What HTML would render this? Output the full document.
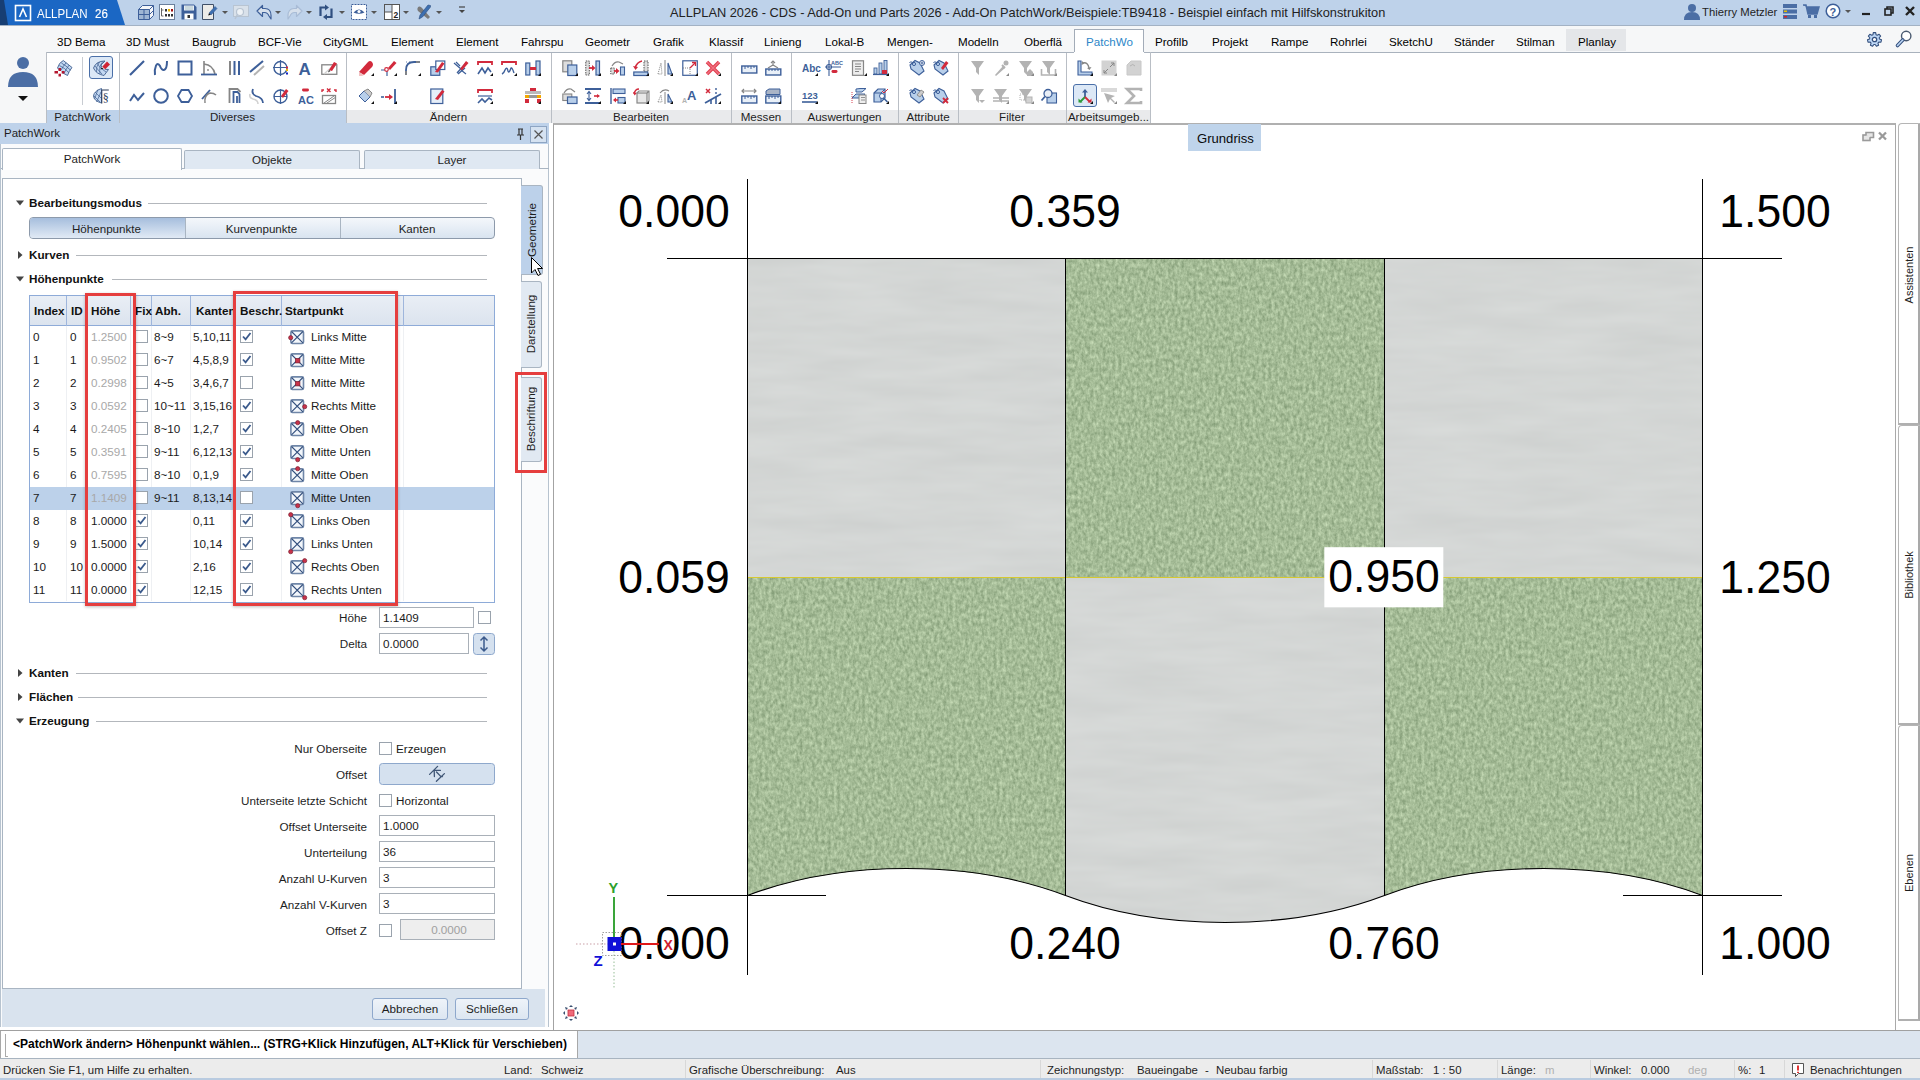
<!DOCTYPE html><html><head><meta charset="utf-8"><style>
*{margin:0;padding:0;box-sizing:border-box}
html,body{width:1920px;height:1080px;overflow:hidden;background:#fff;font-family:"Liberation Sans",sans-serif;color:#1a1a1a}
.a{position:absolute}
.t{position:absolute;white-space:nowrap;line-height:1}
svg{position:absolute;overflow:visible}
</style></head><body><div class="a" style="left:0px;top:0px;width:1920px;height:25px;background:#bed2ea"></div>
<svg style="left:0;top:0" width="130" height="25"><polygon points="0,0 117,0 125,25 0,25" fill="#1b67c4"/><polygon points="0,0 4,0 8,25 0,25" fill="#173e73"/><rect x="15.5" y="5.5" width="15" height="15" fill="none" stroke="#fff" stroke-width="1.6"/><path d="M19.5 17 L23 9 L26.5 17" fill="none" stroke="#fff" stroke-width="1.6"/></svg>
<div class="t" style="left:37px;top:8px;font-size:12.8px;color:#fff;font-weight:normal;transform:scaleX(0.9);transform-origin:0 0">ALLPLAN</div>
<div class="t" style="left:95px;top:8px;font-size:12.8px;color:#fff;font-weight:normal;transform:scaleX(0.9);transform-origin:0 0;-webkit-text-stroke:0.15px #fff">26</div>
<div class="t" style="left:670px;top:7px;font-size:12.8px;color:#222;font-weight:normal;">ALLPLAN 2026 - CDS - Add-On und Parts 2026 - Add-On PatchWork/Beispiele:TB9418 - Beispiel einfach mit Hilfskonstrukiton</div>
<div class="a" style="left:0px;top:25px;width:1920px;height:27px;background:#f6f7f8"></div>
<div class="a" style="left:0px;top:25px;width:1920px;height:1px;background:#a3b2c4"></div>
<div class="a" style="left:1566px;top:29px;width:60px;height:22px;background:#e4e6e9"></div>
<div class="a" style="left:1074px;top:29px;width:70px;height:25px;background:#fff;border:1px solid #a3acb8;border-bottom:none"></div>
<div class="t" style="left:57px;top:36px;font-size:11.6px;color:#000;font-weight:normal;">3D Bema</div>
<div class="t" style="left:126px;top:36px;font-size:11.6px;color:#000;font-weight:normal;">3D Must</div>
<div class="t" style="left:192px;top:36px;font-size:11.6px;color:#000;font-weight:normal;">Baugrub</div>
<div class="t" style="left:258px;top:36px;font-size:11.6px;color:#000;font-weight:normal;">BCF-Vie</div>
<div class="t" style="left:323px;top:36px;font-size:11.6px;color:#000;font-weight:normal;">CityGML</div>
<div class="t" style="left:391px;top:36px;font-size:11.6px;color:#000;font-weight:normal;">Element</div>
<div class="t" style="left:456px;top:36px;font-size:11.6px;color:#000;font-weight:normal;">Element</div>
<div class="t" style="left:521px;top:36px;font-size:11.6px;color:#000;font-weight:normal;">Fahrspu</div>
<div class="t" style="left:585px;top:36px;font-size:11.6px;color:#000;font-weight:normal;">Geometr</div>
<div class="t" style="left:653px;top:36px;font-size:11.6px;color:#000;font-weight:normal;">Grafik</div>
<div class="t" style="left:709px;top:36px;font-size:11.6px;color:#000;font-weight:normal;">Klassif</div>
<div class="t" style="left:764px;top:36px;font-size:11.6px;color:#000;font-weight:normal;">Linieng</div>
<div class="t" style="left:825px;top:36px;font-size:11.6px;color:#000;font-weight:normal;">Lokal-B</div>
<div class="t" style="left:887px;top:36px;font-size:11.6px;color:#000;font-weight:normal;">Mengen-</div>
<div class="t" style="left:958px;top:36px;font-size:11.6px;color:#000;font-weight:normal;">Modelln</div>
<div class="t" style="left:1024px;top:36px;font-size:11.6px;color:#000;font-weight:normal;">Oberflä</div>
<div class="t" style="left:1086px;top:36px;font-size:11.6px;color:#2c86c8;font-weight:normal;">PatchWo</div>
<div class="t" style="left:1155px;top:36px;font-size:11.6px;color:#000;font-weight:normal;">Profilb</div>
<div class="t" style="left:1212px;top:36px;font-size:11.6px;color:#000;font-weight:normal;">Projekt</div>
<div class="t" style="left:1271px;top:36px;font-size:11.6px;color:#000;font-weight:normal;">Rampe</div>
<div class="t" style="left:1330px;top:36px;font-size:11.6px;color:#000;font-weight:normal;">Rohrlei</div>
<div class="t" style="left:1389px;top:36px;font-size:11.6px;color:#000;font-weight:normal;">SketchU</div>
<div class="t" style="left:1454px;top:36px;font-size:11.6px;color:#000;font-weight:normal;">Ständer</div>
<div class="t" style="left:1516px;top:36px;font-size:11.6px;color:#000;font-weight:normal;">Stilman</div>
<div class="t" style="left:1578px;top:36px;font-size:11.6px;color:#000;font-weight:normal;">Planlay</div>
<div class="a" style="left:0px;top:52px;width:1920px;height:71px;background:#fff"></div>
<div class="a" style="left:0px;top:52px;width:1074px;height:1px;background:#a9b2bd"></div>
<div class="a" style="left:1144px;top:52px;width:776px;height:1px;background:#a9b2bd"></div>
<div class="a" style="left:0px;top:52px;width:46px;height:71px;background:#f6f7f8"></div>
<div class="a" style="left:46px;top:52px;width:1px;height:71px;background:#b9bec5"></div>
<div class="a" style="left:1150px;top:52px;width:1px;height:71px;background:#b9bec5"></div>
<div class="a" style="left:47px;top:110px;width:300px;height:13px;background:#bed2ea"></div>
<div class="a" style="left:347px;top:110px;width:803px;height:13px;background:#e9eaec"></div>
<div class="t" style="left:46px;top:111px;width:73px;text-align:center;font-size:11.6px;color:#1e1e1e">PatchWork</div>
<div class="a" style="left:119px;top:53px;width:1px;height:70px;background:#b9bec5"></div>
<div class="t" style="left:119px;top:111px;width:227px;text-align:center;font-size:11.6px;color:#1e1e1e">Diverses</div>
<div class="a" style="left:346px;top:53px;width:1px;height:70px;background:#b9bec5"></div>
<div class="t" style="left:346px;top:111px;width:205px;text-align:center;font-size:11.6px;color:#1e1e1e">Ändern</div>
<div class="a" style="left:551px;top:53px;width:1px;height:70px;background:#b9bec5"></div>
<div class="t" style="left:551px;top:111px;width:180px;text-align:center;font-size:11.6px;color:#1e1e1e">Bearbeiten</div>
<div class="a" style="left:731px;top:53px;width:1px;height:70px;background:#b9bec5"></div>
<div class="t" style="left:731px;top:111px;width:60px;text-align:center;font-size:11.6px;color:#1e1e1e">Messen</div>
<div class="a" style="left:791px;top:53px;width:1px;height:70px;background:#b9bec5"></div>
<div class="t" style="left:791px;top:111px;width:107px;text-align:center;font-size:11.6px;color:#1e1e1e">Auswertungen</div>
<div class="a" style="left:898px;top:53px;width:1px;height:70px;background:#b9bec5"></div>
<div class="t" style="left:898px;top:111px;width:60px;text-align:center;font-size:11.6px;color:#1e1e1e">Attribute</div>
<div class="a" style="left:958px;top:53px;width:1px;height:70px;background:#b9bec5"></div>
<div class="t" style="left:958px;top:111px;width:108px;text-align:center;font-size:11.6px;color:#1e1e1e">Filter</div>
<div class="a" style="left:1066px;top:53px;width:1px;height:70px;background:#b9bec5"></div>
<div class="t" style="left:1066px;top:111px;width:85px;text-align:center;font-size:11.6px;color:#1e1e1e">Arbeitsumgeb...</div>
<svg style="left:6px;top:54px" width="34" height="48"><circle cx="17" cy="9" r="6" fill="#4b6ea5"/><path d="M2 33 Q2 18 17 18 Q32 18 32 33 Z" fill="#4b6ea5"/><path d="M12 42h10l-5 5z" fill="#111"/></svg>
<svg style="left:56px;top:60px" width="16" height="16" viewBox="0 0 16 16"><path d="M1.5 8 Q3 2.5 7.3 0.5 L16 7.5 Q13 11 11.5 15.5 Q5 13 1.5 8 Z" fill="#c3d8f2" stroke="#3f5f8f" stroke-width="0.9"/><path d="M3.4 5.5 Q9 8 13 12.8 M5.4 3 Q10 5.5 14.5 10.2 M10.2 2.8 Q7 6 4.8 10.5 M13.1 5.2 Q10 9 8.2 13" fill="none" stroke="#3f5f8f" stroke-width="0.8"/><g fill="#b5172f"><rect x="-1.5" y="11" width="3.5" height="2.5"/><rect x="5.5" y="11" width="3" height="2.5"/><rect x="2.5" y="8" width="2.5" height="3"/><rect x="2.5" y="13.5" width="2.5" height="3"/></g><rect x="2" y="11" width="3.5" height="2.5" fill="#fff"/></svg>
<div class="a" style="left:82px;top:57px;width:1px;height:48px;background:#c8ccd2"></div>
<div class="a" style="left:89px;top:56px;width:24px;height:23px;background:#dce8f6;border:1.3px solid #4a6fa8;border-radius:3px"></div>
<svg style="left:93px;top:60px" width="16" height="16" viewBox="0 0 16 16"><path d="M12 1 Q3 1 0.5 8 Q3 14 11 15.5 L15.5 9.5 Q9 10 8 5 Z" fill="#c3d8f2" stroke="#3f5f8f" stroke-width="0.9"/><path d="M4 3 Q6 8 13 12 M2 6 Q5 10 9 14 M6.5 2 Q2.5 7 3.5 12 M10 1.5 Q5.5 6 7 14" fill="none" stroke="#3f5f8f" stroke-width="0.7"/><path d="M9 7 L14 1.5 L17 4.5 L12 9.5 Z" fill="#d02535"/><path d="M9 7l-1.5 2.5l3-1z" fill="#111"/><path d="M9 7l3 2.5" stroke="#fff" stroke-width="0.8"/></svg>
<svg style="left:93px;top:88px" width="16" height="16" viewBox="0 0 16 16"><path d="M8.5 0.5 Q1 3 0.5 8 Q1 13 8.5 15 Z" fill="#c3d8f2" stroke="#3f5f8f" stroke-width="0.9"/><path d="M2 4 L8 10 M1 8 L7 14 M5 1.5 L1.5 11 M8 4 L3.5 14" stroke="#3f5f8f" stroke-width="0.7"/><path d="M8.8 2v13.5M8.8 2h7" stroke="#2a3c5a" stroke-width="1"/><text x="9.8" y="14" font-size="12" font-family="Liberation Serif" fill="#2a3c5a">§</text></svg>
<svg style="left:129px;top:60px" width="16" height="16" viewBox="0 0 16 16"><path d="M1 15L15 1" stroke="#3d5f99" stroke-width="2.2"/></svg>
<svg style="left:153px;top:60px" width="16" height="16" viewBox="0 0 16 16"><path d="M2 15 C1 8 4 0 7 6 C9 12 14 12 14 1" fill="none" stroke="#3d5f99" stroke-width="2"/></svg>
<svg style="left:177px;top:60px" width="16" height="16" viewBox="0 0 16 16"><rect x="1.5" y="1.5" width="13" height="13" fill="none" stroke="#3d5f99" stroke-width="2"/></svg>
<svg style="left:201px;top:60px" width="16" height="16" viewBox="0 0 16 16"><path d="M3 1v13 M3 4 Q12 5 14 14" fill="none" stroke="#868686" stroke-width="1.6"/><path d="M0 14.5h16" stroke="#3d5f99" stroke-width="1.8"/><circle cx="7" cy="10" r="0.9" fill="#868686"/></svg>
<svg style="left:228px;top:60px" width="16" height="16" viewBox="0 0 16 16"><path d="M2 1v14" stroke="#868686" stroke-width="2"/><path d="M6.5 1v14M11 1v14" stroke="#3d5f99" stroke-width="2"/></svg>
<svg style="left:249px;top:60px" width="16" height="16" viewBox="0 0 16 16"><path d="M1 12L14 1" stroke="#3d5f99" stroke-width="2"/><path d="M5 15L15 6" stroke="#b3b3b3" stroke-width="2"/></svg>
<svg style="left:273px;top:60px" width="16" height="16" viewBox="0 0 16 16"><circle cx="7.5" cy="8" r="6.5" fill="none" stroke="#3d5f99" stroke-width="1.4"/><path d="M7.5 0v16M0 7.5h15" stroke="#3d5f99" stroke-width="1.2"/><rect x="13" y="6.5" width="2" height="2" fill="#d22a3c"/><rect x="13" y="9" width="2" height="2" fill="#e8b400"/><rect x="13" y="12.5" width="2" height="2" fill="#1020c0"/></svg>
<svg style="left:298px;top:60px" width="16" height="16" viewBox="0 0 16 16"><text x="0.5" y="15" font-size="17" font-weight="bold" font-family="Liberation Sans" fill="#3d5f99">A</text></svg>
<svg style="left:321px;top:60px" width="16" height="16" viewBox="0 0 16 16"><rect x="0.8" y="4.8" width="15" height="9.5" fill="none" stroke="#868686" stroke-width="1.3"/><path d="M3 14L15 3" stroke="#d2d2d2" stroke-width="1.2"/><path d="M8 10 L13 2 L16 3.5 L11 11 Z" fill="#d22a3c"/><path d="M8 10l-1 2.5l2.5-1.5z" fill="#222"/></svg>
<svg style="left:358px;top:60px" width="16" height="16" viewBox="0 0 16 16"><path d="M1 12 L10 2 Q12 0 14 2 L15 4 Q15 6 14 7 L6 15 Z" fill="#d22a3c"/><path d="M1 12l5 3l-2 1h-3z" fill="#f0c0c0"/><path d="M13 16h3v-3z" fill="#111"/></svg>
<svg style="left:381px;top:60px" width="16" height="16" viewBox="0 0 16 16"><path d="M0 10h6M6 10v6" stroke="#3d5f99" stroke-width="1.2"/><circle cx="5.5" cy="9.5" r="1.8" fill="#fff" stroke="#d22a3c" stroke-width="1.2"/><path d="M7 8 L13 1 L15.5 3 L9 10 Z" fill="#d22a3c"/><path d="M13 16h3v-3z" fill="#111"/></svg>
<svg style="left:405px;top:60px" width="16" height="16" viewBox="0 0 16 16"><path d="M1 2h2M4 2h1" stroke="#3d5f99" stroke-width="0.8" stroke-dasharray="1 1"/><path d="M1 15V10 Q1 2 9 2 H15" fill="none" stroke="#3d5f99" stroke-width="1.8"/><path d="M1 15v-4" stroke="#868686" stroke-width="1.8"/><path d="M11 2h4" stroke="#868686" stroke-width="1.8"/><path d="M13 16h3v-3z" fill="#111"/></svg>
<svg style="left:430px;top:60px" width="16" height="16" viewBox="0 0 16 16"><rect x="0.8" y="6.8" width="9" height="8.5" fill="#b8cfea" stroke="#3d5f99" stroke-width="1.2"/><rect x="5.8" y="1" width="9" height="8.5" fill="#fff" stroke="#3d5f99" stroke-width="1.2"/><path d="M5 12 L12 2 L14.5 3.5 L8 12.5 Z" fill="#d22a3c"/></svg>
<svg style="left:453px;top:60px" width="16" height="16" viewBox="0 0 16 16"><path d="M1 3l7 6M5 14l7-6M4 13l9-10" stroke="#3d5f99" stroke-width="1.3"/><path d="M7 9 L13 1 L15.5 3 L9 10.5 Z" fill="#d22a3c"/><path d="M3 2l4 4M8 10l5 4" stroke="#3d5f99" stroke-width="1.2"/></svg>
<svg style="left:477px;top:60px" width="16" height="16" viewBox="0 0 16 16"><path d="M1 5V2h14v3" fill="none" stroke="#d22a3c" stroke-width="1.8"/><path d="M1 14l4-6l3 5l3-5l3 4" fill="none" stroke="#3d5f99" stroke-width="1.6"/><path d="M13 16h3v-3z" fill="#111"/></svg>
<svg style="left:501px;top:60px" width="16" height="16" viewBox="0 0 16 16"><path d="M1 5V2h14v3" fill="none" stroke="#d22a3c" stroke-width="1.8"/><path d="M1 14 Q3 13 4 10 Q6 6 7 11 Q8 14 10 8 Q11 7 13 13" fill="none" stroke="#3d5f99" stroke-width="1.4"/><path d="M13 16h3v-3z" fill="#111"/></svg>
<svg style="left:525px;top:60px" width="16" height="16" viewBox="0 0 16 16"><rect x="0.8" y="3" width="4" height="12" fill="#b8cfea" stroke="#3d5f99" stroke-width="1.2"/><rect x="11" y="1" width="4" height="14" fill="#b8cfea" stroke="#3d5f99" stroke-width="1.2"/><rect x="5" y="7" width="6" height="3" fill="#d22a3c"/><path d="M13 16h3v-3z" fill="#111"/></svg>
<svg style="left:562px;top:60px" width="16" height="16" viewBox="0 0 16 16"><rect x="0.8" y="0.8" width="9" height="11" fill="#ddd" stroke="#868686" stroke-width="1.2"/><rect x="5.8" y="5" width="9" height="10.5" fill="#b8cfea" stroke="#3d5f99" stroke-width="1.2"/><path d="M13 16h3v-3z" fill="#111"/></svg>
<svg style="left:585px;top:60px" width="16" height="16" viewBox="0 0 16 16"><rect x="0.8" y="1" width="3.5" height="14" fill="#ddd" stroke="#555" stroke-width="1" stroke-dasharray="1.5 1"/><rect x="11" y="1" width="3.5" height="14" fill="#b8cfea" stroke="#3d5f99" stroke-width="1.2"/><path d="M4 8h4" stroke="#d22a3c" stroke-width="1.8"/><path d="M7 5l3.5 3l-3.5 3z" fill="#d22a3c"/><path d="M13 16h3v-3z" fill="#111"/></svg>
<svg style="left:610px;top:60px" width="16" height="16" viewBox="0 0 16 16"><path d="M2 6 Q5 1 9 2 L13 4" fill="none" stroke="#868686" stroke-width="1.2"/><rect x="0.8" y="8" width="3.5" height="6" fill="#ddd" stroke="#555" stroke-dasharray="1.5 1"/><path d="M4 11h3" stroke="#d22a3c" stroke-width="1.8"/><path d="M6 8l3.5 3l-3.5 3z" fill="#d22a3c"/><rect x="10.5" y="7" width="4" height="8" fill="#b8cfea" stroke="#3d5f99" stroke-width="1.1"/></svg>
<svg style="left:633px;top:60px" width="16" height="16" viewBox="0 0 16 16"><path d="M2 8 Q4 2 9 1" fill="none" stroke="#d22a3c" stroke-width="1.6"/><path d="M0 6l2.5 4l2.5-3z" fill="#d22a3c"/><rect x="11" y="1" width="4" height="11" fill="#ddd" stroke="#555" stroke-dasharray="1.5 1"/><rect x="0.8" y="12" width="14" height="3.5" fill="#b8cfea" stroke="#3d5f99" stroke-width="1.2"/><path d="M13 16h3v-3z" fill="#111"/></svg>
<svg style="left:657px;top:60px" width="16" height="16" viewBox="0 0 16 16"><path d="M1 14 L4 3 L5 14 Z" fill="none" stroke="#868686" stroke-width="1" stroke-dasharray="1 1"/><path d="M8 0v16" stroke="#868686" stroke-width="1"/><path d="M11 3 L11 14 L15 14 Z" fill="#b8cfea" stroke="#3d5f99" stroke-width="1.1"/><path d="M13 16h3v-3z" fill="#111"/></svg>
<svg style="left:682px;top:60px" width="16" height="16" viewBox="0 0 16 16"><rect x="0.8" y="0.8" width="14.5" height="14.5" fill="none" stroke="#3d5f99" stroke-width="1.2"/><path d="M1 8h7v7" fill="none" stroke="#868686" stroke-width="1" stroke-dasharray="1 1"/><path d="M8 8l5-5" stroke="#d22a3c" stroke-width="1.3"/><path d="M10 2.5h3.5v3.5" fill="none" stroke="#d22a3c" stroke-width="1.3"/><path d="M13 16h3v-3z" fill="#111"/></svg>
<svg style="left:705px;top:60px" width="16" height="16" viewBox="0 0 16 16"><path d="M2 2 L14 14 M14 2 L2 14" stroke="#e04050" stroke-width="3.6"/><path d="M2 2 L14 14 M14 2 L2 14" stroke="#f07080" stroke-width="1.4"/><path d="M13 16h3v-3z" fill="#111"/></svg>
<svg style="left:741px;top:60px" width="16" height="16" viewBox="0 0 16 16"><rect x="0.8" y="6" width="15" height="7" fill="#e9f0f8" stroke="#3d5f99" stroke-width="1.4"/><path d="M4 6v3M7 6v2M10 6v3M13 6v2" stroke="#3d5f99" stroke-width="1"/></svg>
<svg style="left:765px;top:60px" width="16" height="16" viewBox="0 0 16 16"><rect x="0.8" y="9" width="15" height="6" fill="#e9f0f8" stroke="#3d5f99" stroke-width="1.4"/><path d="M4 9v2M7 9v2M10 9v2M13 9v2" stroke="#3d5f99" stroke-width="1"/><path d="M8 1v5M3 8l5-3l5 3" fill="none" stroke="#868686" stroke-width="1.2"/><path d="M6 3l2-2l2 2" fill="none" stroke="#868686" stroke-width="1.2"/></svg>
<svg style="left:802px;top:60px" width="16" height="16" viewBox="0 0 16 16"><text x="0" y="12" font-size="10" font-weight="bold" font-family="Liberation Sans" fill="#3d5f99">Abc</text><path d="M13 16h3v-3z" fill="#111"/></svg>
<svg style="left:825px;top:60px" width="16" height="16" viewBox="0 0 16 16"><circle cx="4" cy="7" r="2.5" fill="none" stroke="#3d5f99" stroke-width="1.1"/><path d="M4 0v16M0 7h16" stroke="#3d5f99" stroke-width="1.1"/><text x="6" y="5" font-size="5.5" font-weight="bold" font-family="Liberation Sans" fill="#3d5f99">ABC</text><rect x="6.5" y="10" width="6" height="3" rx="1.4" fill="#d22a3c"/></svg>
<svg style="left:851px;top:60px" width="16" height="16" viewBox="0 0 16 16"><rect x="1.5" y="0.8" width="11" height="14.5" fill="#eee" stroke="#868686" stroke-width="1.2"/><path d="M4 4h6M4 6.5h6M4 9h6M4 11.5h4" stroke="#868686" stroke-width="1"/><path d="M13 16h3v-3z" fill="#111"/></svg>
<svg style="left:873px;top:60px" width="16" height="16" viewBox="0 0 16 16"><rect x="1" y="8" width="3" height="6" fill="#b8cfea" stroke="#3d5f99" stroke-width="0.9"/><rect x="6" y="3" width="3" height="11" fill="#b8cfea" stroke="#3d5f99" stroke-width="0.9"/><rect x="11" y="0.5" width="3" height="13.5" fill="#b8cfea" stroke="#3d5f99" stroke-width="0.9"/><rect x="9" y="10" width="5" height="5" fill="#d22a3c"/><path d="M0 14.5h16" stroke="#3d5f99" stroke-width="1.2"/><path d="M13 16h3v-3z" fill="#111"/></svg>
<svg style="left:909px;top:60px" width="16" height="16" viewBox="0 0 16 16"><path d="M1 5 L6 0.5 L11 3 L15 11 L10 15 L2 9 Z" fill="#b8cfea" stroke="#3d5f99" stroke-width="1.1"/><circle cx="5" cy="4" r="1.6" fill="none" stroke="#3d5f99" stroke-width="1"/><path d="M4 4 Q2 0 0.5 3" fill="none" stroke="#3d5f99" stroke-width="0.9"/><circle cx="13" cy="3" r="2.5" fill="#fff" stroke="#3d5f99" stroke-width="1"/><path d="M13 1.5v3M11.5 3h3" stroke="#3d5f99" stroke-width="0.9"/></svg>
<svg style="left:933px;top:60px" width="16" height="16" viewBox="0 0 16 16"><path d="M1 5 L6 0.5 L11 3 L15 11 L10 15 L2 9 Z" fill="#b8cfea" stroke="#3d5f99" stroke-width="1.1"/><circle cx="5" cy="4" r="1.6" fill="none" stroke="#3d5f99" stroke-width="1"/><path d="M4 4 Q2 0 0.5 3" fill="none" stroke="#3d5f99" stroke-width="0.9"/><path d="M8 8 L13 1 L15.5 3 L10 10 Z" fill="#d22a3c"/></svg>
<svg style="left:970px;top:60px" width="16" height="16" viewBox="0 0 16 16"><path d="M1 1h13l-5 7v7l-3-3V8z" fill="#b3b3b3"/></svg>
<svg style="left:993px;top:60px" width="16" height="16" viewBox="0 0 16 16"><path d="M2 15 L10 6 L12 8 L3 16z" fill="#b3b3b3"/><circle cx="13" cy="3" r="2.5" fill="#b3b3b3"/><path d="M9 5l3 3" stroke="#b3b3b3" stroke-width="2"/><path d="M13 16h3v-3z" fill="#888"/></svg>
<svg style="left:1018px;top:60px" width="16" height="16" viewBox="0 0 16 16"><path d="M1 1h13l-5 7v7l-3-3V8z" fill="#b3b3b3"/><path d="M9 16v-4l3-3l3 3v4z" fill="#b3b3b3"/><path d="M13 16h3v-3z" fill="#888"/></svg>
<svg style="left:1041px;top:60px" width="16" height="16" viewBox="0 0 16 16"><path d="M1 1h13l-5 7v7l-3-3V8z" fill="#b3b3b3"/><path d="M0.5 9v6h14v-6" fill="none" stroke="#b3b3b3" stroke-width="1.6"/><path d="M13 16h3v-3z" fill="#888"/></svg>
<svg style="left:1077px;top:60px" width="16" height="16" viewBox="0 0 16 16"><path d="M1 1V15H15V12H4V1z" fill="#b8cfea" stroke="#3d5f99" stroke-width="1.1"/><path d="M6 3 Q11 2 12 8" fill="none" stroke="#868686" stroke-width="1.5"/><path d="M5 1l2.5 2.5l-3 1.5zM10 8l2.5 2l2-3z" fill="#868686"/><path d="M13 16h3v-3z" fill="#111"/></svg>
<svg style="left:1101px;top:60px" width="16" height="16" viewBox="0 0 16 16"><rect x="0.5" y="0.5" width="15" height="15" fill="#d2d2d2"/><path d="M3 13l4-4M3 13h3M3 13v-3M13 3l-4 4M13 3h-3M13 3v3" stroke="#868686" stroke-width="1"/><path d="M13 16h3v-3z" fill="#888"/></svg>
<svg style="left:1126px;top:60px" width="16" height="16" viewBox="0 0 16 16"><path d="M1 15V5l4-4h10v14z" fill="#d2d2d2" stroke="#c8c8c8"/><path d="M4 6 Q7 3 9 6" fill="none" stroke="#b3b3b3" stroke-width="1"/></svg>
<svg style="left:129px;top:88px" width="16" height="16" viewBox="0 0 16 16"><path d="M1 13L5 7L9 12L15 5" fill="none" stroke="#3d5f99" stroke-width="2"/></svg>
<svg style="left:153px;top:88px" width="16" height="16" viewBox="0 0 16 16"><circle cx="8" cy="8" r="6.8" fill="none" stroke="#3d5f99" stroke-width="2"/></svg>
<svg style="left:177px;top:88px" width="16" height="16" viewBox="0 0 16 16"><path d="M4.5 2h7l3.5 6l-3.5 6h-7l-3.5-6z" fill="none" stroke="#3d5f99" stroke-width="1.8"/></svg>
<svg style="left:201px;top:88px" width="16" height="16" viewBox="0 0 16 16"><path d="M1 11L9 2" stroke="#3d5f99" stroke-width="1.8"/><path d="M4 15 Q3 7 9 5 Q13 5 15 7" fill="none" stroke="#868686" stroke-width="1.5"/></svg>
<svg style="left:228px;top:88px" width="16" height="16" viewBox="0 0 16 16"><path d="M1.5 15V1h8 l3 3" fill="none" stroke="#868686" stroke-width="1.8"/><path d="M5.5 15V4h4l2 2v9" fill="none" stroke="#3d5f99" stroke-width="1.8"/><path d="M9 15v-7" stroke="#3d5f99" stroke-width="1.8"/></svg>
<svg style="left:249px;top:88px" width="16" height="16" viewBox="0 0 16 16"><path d="M4 1 Q2 6 7 8 Q14 10 14 15" fill="none" stroke="#3d5f99" stroke-width="1.8"/><path d="M1 6 Q0 10 4 11 Q9 12 9 16" fill="none" stroke="#d2d2d2" stroke-width="1.6"/></svg>
<svg style="left:273px;top:88px" width="16" height="16" viewBox="0 0 16 16"><circle cx="7.5" cy="8.5" r="6.5" fill="none" stroke="#3d5f99" stroke-width="1.4"/><path d="M7.5 1v15M1 8.5h13" stroke="#3d5f99" stroke-width="1.2"/><path d="M8 8 L13 1 L15.5 3 L10 10 Z" fill="#d22a3c"/></svg>
<svg style="left:298px;top:88px" width="16" height="16" viewBox="0 0 16 16"><rect x="4" y="0.5" width="7" height="3" rx="1.4" fill="#d22a3c"/><text x="0" y="15.5" font-size="11" font-weight="bold" font-family="Liberation Sans" fill="#3d5f99">AC</text></svg>
<svg style="left:321px;top:88px" width="16" height="16" viewBox="0 0 16 16"><path d="M1 4V2h2M13 2h2v2" fill="none" stroke="#d22a3c" stroke-width="1.4"/><path d="M6 0.5l3.5 3.5M9.5 0.5L6 4" stroke="#d22a3c" stroke-width="1.4"/><rect x="1.5" y="7.5" width="13" height="8" fill="none" stroke="#868686" stroke-width="1.3"/><path d="M3 15L13 8M6 15L15 9" stroke="#868686" stroke-width="1"/></svg>
<svg style="left:358px;top:88px" width="16" height="16" viewBox="0 0 16 16"><path d="M1 8 L6 3 L12 9 L7 14 Z" fill="#b8cfea" stroke="#3d5f99" stroke-width="1"/><path d="M6 3 L10 1 L14 5 L12 9" fill="#ccc" stroke="#868686" stroke-width="1"/><path d="M13 16h3v-3z" fill="#111"/></svg>
<svg style="left:381px;top:88px" width="16" height="16" viewBox="0 0 16 16"><path d="M0 9h3" stroke="#3d5f99" stroke-width="1.6"/><path d="M4 9h6" stroke="#d22a3c" stroke-width="1.8"/><path d="M8 6l4 3l-4 3z" fill="#d22a3c"/><path d="M14 1v15" stroke="#3d5f99" stroke-width="1.8"/><path d="M13 16h3v-3z" fill="#111"/></svg>
<svg style="left:430px;top:88px" width="16" height="16" viewBox="0 0 16 16"><rect x="0.8" y="1" width="12" height="14.5" fill="#e6eef8" stroke="#3d5f99" stroke-width="1.2"/><path d="M5 11 L12 2 L14.5 3.5 L8 12 Z" fill="#d22a3c"/></svg>
<svg style="left:477px;top:88px" width="16" height="16" viewBox="0 0 16 16"><path d="M1 5V2h14v3" fill="none" stroke="#d22a3c" stroke-width="1.8"/><path d="M1 8h14" stroke="#3d5f99" stroke-width="1.2"/><path d="M1 15l4-4l3 3l4-4l3 2" fill="none" stroke="#3d5f99" stroke-width="1.6"/><path d="M13 16h3v-3z" fill="#111"/></svg>
<svg style="left:525px;top:88px" width="16" height="16" viewBox="0 0 16 16"><rect x="5" y="0" width="6" height="3" fill="#d22a3c"/><rect x="0" y="3" width="16" height="3" fill="#bbb"/><rect x="0" y="7" width="16" height="3" fill="#f2a900"/><rect x="4" y="7" width="8" height="3" fill="#999"/><rect x="0" y="11" width="16" height="4" fill="#d22a3c"/><rect x="4" y="11" width="8" height="4" fill="#fff"/><path d="M13 16h3v-3z" fill="#111"/></svg>
<svg style="left:562px;top:88px" width="16" height="16" viewBox="0 0 16 16"><path d="M2 5 Q5 0 9 1 L13 4" fill="none" stroke="#868686" stroke-width="1.2"/><rect x="0.8" y="6" width="9" height="6.5" fill="#ddd" stroke="#868686" stroke-width="1.1"/><rect x="5.5" y="9" width="9.5" height="6.5" fill="#b8cfea" stroke="#3d5f99" stroke-width="1.2"/></svg>
<svg style="left:585px;top:88px" width="16" height="16" viewBox="0 0 16 16"><path d="M0 1h16M0 15h16" stroke="#3d5f99" stroke-width="1.8"/><path d="M4 4v8M2 6l2-2.5l2 2.5M2 10l2 2.5l2-2.5" fill="none" stroke="#3d5f99" stroke-width="1.1"/><path d="M9 8h5" stroke="#d22a3c" stroke-width="1.6"/><path d="M12 6l3 2l-3 2z" fill="#d22a3c"/><path d="M13 16h3v-3z" fill="#111"/></svg>
<svg style="left:610px;top:88px" width="16" height="16" viewBox="0 0 16 16"><path d="M1 0v16" stroke="#3d5f99" stroke-width="1.4"/><rect x="3" y="1" width="12" height="4.5" fill="#b8cfea" stroke="#3d5f99" stroke-width="1.1"/><rect x="8" y="9.5" width="7" height="5.5" fill="#b8cfea" stroke="#3d5f99" stroke-width="1.1"/><path d="M4 12h4" stroke="#d22a3c" stroke-width="1.6"/><path d="M3 12l3-2.5v5z" fill="#d22a3c"/><path d="M13 16h3v-3z" fill="#111"/></svg>
<svg style="left:633px;top:88px" width="16" height="16" viewBox="0 0 16 16"><path d="M1 6 Q2 1 6 1" fill="none" stroke="#d22a3c" stroke-width="1.5"/><path d="M0 4l1.5 3.5l2.5-2.5z" fill="#d22a3c"/><rect x="4" y="5" width="10" height="10" fill="#e8e8e8" stroke="#868686" stroke-width="1.2"/><path d="M4 5l2-2h10v10l-2 2M14 5l2-2" fill="none" stroke="#868686" stroke-width="1.1"/><path d="M13 16h3v-3z" fill="#111"/></svg>
<svg style="left:657px;top:88px" width="16" height="16" viewBox="0 0 16 16"><path d="M3 5 Q7 0 12 3" fill="none" stroke="#868686" stroke-width="1.1"/><path d="M1 14 L4 7 L5 14 Z" fill="none" stroke="#868686" stroke-dasharray="1 1"/><path d="M8 4v12" stroke="#868686" stroke-width="1"/><path d="M11 6 L11 14 L15 14 Z" fill="#b8cfea" stroke="#3d5f99" stroke-width="1.1"/><path d="M13 16h3v-3z" fill="#111"/></svg>
<svg style="left:682px;top:88px" width="16" height="16" viewBox="0 0 16 16"><text x="0" y="15" font-size="7" font-weight="bold" font-family="Liberation Sans" fill="#b3b3b3">A</text><text x="5" y="12" font-size="13" font-weight="bold" font-family="Liberation Sans" fill="#3d5f99">A</text></svg>
<svg style="left:705px;top:88px" width="16" height="16" viewBox="0 0 16 16"><path d="M1 1l4 4M5 1l-4 4" stroke="#d22a3c" stroke-width="1.5"/><path d="M11 0v2M11 4v2" stroke="#3d5f99" stroke-width="1.4"/><path d="M0 15 L16 6" stroke="#3d5f99" stroke-width="1.8"/><path d="M6 12v4M11 9v7" stroke="#3d5f99" stroke-width="1.6"/><path d="M13 16h3v-3z" fill="#111"/></svg>
<svg style="left:741px;top:88px" width="16" height="16" viewBox="0 0 16 16"><rect x="0.8" y="8" width="15" height="7" fill="#e9f0f8" stroke="#3d5f99" stroke-width="1.4"/><path d="M4 8v3M7 8v2M10 8v3M13 8v2" stroke="#3d5f99" stroke-width="1"/><path d="M1 3h14M3 1l-2 2l2 2M13 1l2 2l-2 2" fill="none" stroke="#868686" stroke-width="1.2"/></svg>
<svg style="left:765px;top:88px" width="16" height="16" viewBox="0 0 16 16"><rect x="0.8" y="8" width="15" height="7" fill="#e9f0f8" stroke="#3d5f99" stroke-width="1.4"/><path d="M4 8v3M7 8v2M10 8v3M13 8v2" stroke="#3d5f99" stroke-width="1"/><path d="M1 6.5V3l3-2h11v5.5z" fill="#a9b4c6" stroke="#3d5f99" stroke-width="1"/><path d="M13 16h3v-3z" fill="#111"/></svg>
<svg style="left:802px;top:88px" width="16" height="16" viewBox="0 0 16 16"><text x="0" y="11" font-size="9.5" font-weight="bold" font-family="Liberation Sans" fill="#3d5f99">123</text><path d="M0 14h15" stroke="#3d5f99" stroke-width="1.6"/><path d="M13 16h3v-3z" fill="#111"/></svg>
<svg style="left:851px;top:88px" width="16" height="16" viewBox="0 0 16 16"><path d="M1 10 L5 6 H14 L10 10 Z" fill="#b8cfea" stroke="#3d5f99" stroke-width="1"/><path d="M5 1 L9 0.5 H15 L11 4 H5z" fill="#b8cfea" stroke="#3d5f99" stroke-width="1"/><path d="M1 4v11" stroke="#d22a3c" stroke-width="0.9" stroke-dasharray="1 1"/><rect x="8" y="7" width="7" height="8.5" fill="#eee" stroke="#868686" stroke-width="1"/><path d="M10 9.5h4M10 12h4" stroke="#868686" stroke-width="0.9"/></svg>
<svg style="left:873px;top:88px" width="16" height="16" viewBox="0 0 16 16"><path d="M1 5 L5 1 H12 V10 L8 14 H1 Z" fill="#b8cfea" stroke="#3d5f99" stroke-width="1.2"/><path d="M1 5h7v9M8 5l4-4" fill="none" stroke="#3d5f99" stroke-width="1"/><circle cx="9" cy="8" r="2.5" fill="#fff" stroke="#3d5f99" stroke-width="1"/><path d="M10.5 10l4 4" stroke="#3d5f99" stroke-width="1.6"/><path d="M9 3l2 2l4-4" fill="none" stroke="#d22a3c" stroke-width="1"/><path d="M13 16h3v-3z" fill="#111"/></svg>
<svg style="left:909px;top:88px" width="16" height="16" viewBox="0 0 16 16"><path d="M1 5 L6 0.5 L11 3 L15 11 L10 15 L2 9 Z" fill="#b8cfea" stroke="#3d5f99" stroke-width="1.1"/><circle cx="5" cy="4" r="1.6" fill="none" stroke="#3d5f99" stroke-width="1"/><path d="M4 4 Q2 0 0.5 3" fill="none" stroke="#3d5f99" stroke-width="0.9"/><path d="M8 7 L12 2 L15 4 L11 9 Z" fill="#ccc" stroke="#868686" stroke-width="0.9"/></svg>
<svg style="left:933px;top:88px" width="16" height="16" viewBox="0 0 16 16"><path d="M1 5 L6 0.5 L11 3 L15 11 L10 15 L2 9 Z" fill="#b8cfea" stroke="#3d5f99" stroke-width="1.1"/><circle cx="5" cy="4" r="1.6" fill="none" stroke="#3d5f99" stroke-width="1"/><path d="M4 4 Q2 0 0.5 3" fill="none" stroke="#3d5f99" stroke-width="0.9"/><path d="M10 10l5 5M15 10l-5 5" stroke="#d22a3c" stroke-width="1.8"/></svg>
<svg style="left:970px;top:88px" width="16" height="16" viewBox="0 0 16 16"><path d="M1 1h13l-5 7v7l-3-3V8z" fill="#b3b3b3"/><path d="M9 12h6l-3 3z" fill="#b3b3b3"/></svg>
<svg style="left:993px;top:88px" width="16" height="16" viewBox="0 0 16 16"><path d="M1 1h13l-5 7v7l-3-3V8z" fill="#b3b3b3"/><path d="M0 10h16M0 13h16" stroke="#b3b3b3" stroke-width="1.5"/><path d="M13 16h3v-3z" fill="#888"/></svg>
<svg style="left:1018px;top:88px" width="16" height="16" viewBox="0 0 16 16"><path d="M1 1h13l-5 7v7l-3-3V8z" fill="#b3b3b3"/><rect x="2" y="6" width="5" height="6" fill="none" stroke="#b3b3b3" stroke-dasharray="1 1"/><rect x="8" y="9" width="6" height="6" fill="#d2d2d2" stroke="#b3b3b3"/><path d="M13 16h3v-3z" fill="#888"/></svg>
<svg style="left:1041px;top:88px" width="16" height="16" viewBox="0 0 16 16"><rect x="6" y="5" width="9.5" height="10" fill="#b8cfea" stroke="#3d5f99" stroke-width="1.1"/><circle cx="7" cy="5.5" r="4" fill="#e8eef6" stroke="#3d5f99" stroke-width="1.3"/><path d="M4 8.5l-3.5 4" stroke="#3d5f99" stroke-width="1.8"/></svg>
<div class="a" style="left:1073px;top:84px;width:24px;height:23px;background:#dce8f6;border:1.3px solid #4a6fa8;border-radius:3px"></div>
<svg style="left:1077px;top:88px" width="16" height="16" viewBox="0 0 16 16"><path d="M8 9V2" stroke="#3d5f99" stroke-width="1.8"/><path d="M5 4.5l3-3.5l3 3.5z" fill="#3d5f99"/><path d="M8 9l-5 5" stroke="#2a9a3a" stroke-width="1.8"/><path d="M1.5 10.5v4h4z" fill="#2a9a3a"/><path d="M8 9l5 5" stroke="#d22a3c" stroke-width="1.8"/><path d="M14.5 10.5v4h-4z" fill="#d22a3c"/><path d="M13 16h3v-3z" fill="#111"/></svg>
<svg style="left:1101px;top:88px" width="16" height="16" viewBox="0 0 16 16"><path d="M0 1h16M0 3h16" stroke="#b3b3b3" stroke-width="1"/><path d="M3 5l4 10l2-4l4 4l1-1l-4-4l4-2z" fill="#b3b3b3"/><path d="M13 16h3v-3z" fill="#888"/></svg>
<svg style="left:1126px;top:88px" width="16" height="16" viewBox="0 0 16 16"><path d="M15 3V1H1l7 7l-7 7h14v-2" fill="none" stroke="#b3b3b3" stroke-width="2.6"/></svg>
<svg style="left:138px;top:4px" width="16" height="16" viewBox="0 0 16 16"><path d="M0.5 5.5L4.5 1.5H15.5V11.5L11.5 15.5H0.5Z" fill="#f4f6f9" stroke="#3d5f99" stroke-width="1"/><rect x="1" y="6" width="10" height="9" fill="#9fb6d3"/><path d="M0.5 5.5H11.5V15.5M11.5 5.5L15.5 1.5M6 5.5V15.5M0.5 10.5H11.5M15.5 6.5L11.5 10.5" fill="none" stroke="#3d5f99" stroke-width="1"/></svg>
<svg style="left:159px;top:4px" width="16" height="16" viewBox="0 0 16 16"><rect x="0.5" y="0.5" width="15" height="15" fill="#fff" stroke="#6a7f9c" stroke-width="1"/><path d="M2.5 4v8h2M2.5 6h2" fill="none" stroke="#555" stroke-width="0.9"/><rect x="6" y="5" width="2" height="2.5" fill="#333"/><rect x="9" y="5" width="2" height="2.5" fill="#e8b400"/><rect x="12" y="5" width="2" height="2.5" fill="#a01010"/><rect x="6" y="10" width="2" height="2.5" fill="#333"/><rect x="9" y="10" width="2" height="2.5" fill="#333"/><rect x="12" y="10" width="2" height="2.5" fill="#333"/></svg>
<svg style="left:181px;top:4px" width="16" height="16" viewBox="0 0 16 16"><path d="M0.5 0.5H13L15.5 3V15.5H0.5Z" fill="#3d5f99"/><rect x="3" y="1.5" width="10" height="5" fill="#e8eef6"/><path d="M4 3h8M4 5h8" stroke="#8aa" stroke-width="0.6"/><rect x="3.5" y="9.5" width="9" height="6" fill="#fff"/><rect x="6.5" y="11" width="2.5" height="3" fill="#333"/></svg>
<svg style="left:202px;top:4px" width="16" height="16" viewBox="0 0 16 16"><path d="M0.5 0.5H11.5V15.5H0.5Z" fill="#ecebe8" stroke="#3f4f68" stroke-width="1"/><path d="M7 9L13 2.5L15 4.5L9 11Z" fill="#3d6fb0" stroke="#3d5f99" stroke-width="0.6"/><path d="M7 9l-0.8 2.5l2.5-0.8z" fill="#111"/></svg>
<svg style="left:233px;top:4px" width="16" height="16" viewBox="0 0 16 16"><rect x="0.5" y="1.5" width="15" height="11" fill="#d9e1ea" stroke="#b8c4d2" stroke-width="1"/><circle cx="7" cy="8" r="3.5" fill="#eef2f6" stroke="#b8c4d2" stroke-width="1.2"/><path d="M4.5 10.5L2 15" stroke="#b8c4d2" stroke-width="1.5"/></svg>
<svg style="left:256px;top:4px" width="16" height="16" viewBox="0 0 16 16"><path d="M1 7L6.5 1.5V4.5H9C13 4.5 15 7.5 15 11.5V15L13 12C12 9.5 10.5 8.5 8.5 8.5H6.5V12.5Z" fill="#d6e0ec" stroke="#3d5f99" stroke-width="1.2" stroke-linejoin="round"/></svg>
<svg style="left:287px;top:4px" width="16" height="16" viewBox="0 0 16 16"><path d="M15 7L9.5 1.5V4.5H7C3 4.5 1 7.5 1 11.5V15L3 12C4 9.5 5.5 8.5 7.5 8.5H9.5V12.5Z" fill="#d6e0ec" stroke="#a9bcd6" stroke-width="1.2" stroke-linejoin="round"/></svg>
<svg style="left:318px;top:4px" width="16" height="16" viewBox="0 0 16 16"><path d="M2.5 12V3.5H7M13.5 4.5V13H9" fill="none" stroke="#2f4f80" stroke-width="2.2"/><path d="M7 0.5L11 3.5L7 6.5Z" fill="#2f4f80"/><path d="M9 10L5 13L9 16Z" fill="#2f4f80"/></svg>
<svg style="left:351px;top:4px" width="16" height="16" viewBox="0 0 16 16"><rect x="0.5" y="0.5" width="15" height="15" fill="#fff" stroke="#3d5f99" stroke-width="1" stroke-dasharray="2 1"/><path d="M2.5 8.5Q8 2.5 13.5 8.5Q8 11 2.5 8.5Z" fill="#3d5f99"/><circle cx="8" cy="7.5" r="1.6" fill="#fff"/></svg>
<svg style="left:384px;top:4px" width="16" height="16" viewBox="0 0 16 16"><rect x="0.5" y="0.5" width="15" height="15" fill="#fff" stroke="#555" stroke-width="1"/><rect x="1" y="1" width="7" height="7" fill="#c9d8ea"/><path d="M8 0.5V15.5M0.5 8H8" stroke="#555" stroke-width="1"/><text x="9.5" y="14" font-size="8.5" font-weight="bold" font-family="Liberation Sans" fill="#222">2</text></svg>
<svg style="left:416px;top:4px" width="16" height="16" viewBox="0 0 16 16"><path d="M3 2.5A3 3 0 0 0 2 7L12 15L14 13L6 4A3 3 0 0 0 3 2.5Z" fill="#7a7a7a"/><path d="M14.5 1.5L12 1L4 11L3 15L6.5 13L14.5 3Z" fill="#3d6fb0" stroke="#2f4f80" stroke-width="0.6"/></svg>
<svg style="left:222px;top:11px" width="6" height="4"><path d="M0 0h6l-3 3z" fill="#555"/></svg>
<svg style="left:275px;top:11px" width="6" height="4"><path d="M0 0h6l-3 3z" fill="#555"/></svg>
<svg style="left:306px;top:11px" width="6" height="4"><path d="M0 0h6l-3 3z" fill="#555"/></svg>
<svg style="left:339px;top:11px" width="6" height="4"><path d="M0 0h6l-3 3z" fill="#555"/></svg>
<svg style="left:371px;top:11px" width="6" height="4"><path d="M0 0h6l-3 3z" fill="#555"/></svg>
<svg style="left:403px;top:11px" width="6" height="4"><path d="M0 0h6l-3 3z" fill="#555"/></svg>
<svg style="left:436px;top:11px" width="6" height="4"><path d="M0 0h6l-3 3z" fill="#555"/></svg>
<svg style="left:458px;top:6px" width="8" height="10"><path d="M1 1h6" stroke="#444" stroke-width="1.2"/><path d="M1 4h6l-3 3z" fill="#444"/></svg>
<svg style="left:1683px;top:3px" width="18" height="17"><circle cx="9" cy="5" r="4" fill="#4b6ea5"/><path d="M1 17 Q1 9 9 9 Q17 9 17 17z" fill="#4b6ea5"/></svg>
<div class="t" style="left:1702px;top:7px;font-size:11.3px;color:#1e1e1e;font-weight:normal;">Thierry Metzler</div>
<svg style="left:1782px;top:3px" width="16" height="17"><rect x="1" y="1" width="14" height="4" fill="#4b6ea5"/><rect x="1" y="6.5" width="14" height="4" fill="#4b6ea5"/><rect x="1" y="12" width="14" height="4" fill="#4b6ea5"/><rect x="2" y="7.5" width="3" height="1.5" fill="#e8c000"/><rect x="2" y="13" width="3" height="1.5" fill="#d22"/></svg>
<svg style="left:1803px;top:3px" width="16" height="17"><path d="M0 2h3l2 9h9l2-7H4" fill="#4b6ea5" stroke="#4b6ea5" stroke-width="1.5"/><rect x="5" y="12" width="3" height="3" fill="#4b6ea5"/><rect x="11" y="12" width="3" height="3" fill="#4b6ea5"/></svg>
<svg style="left:1825px;top:2px" width="18" height="18"><circle cx="8" cy="9" r="6.8" fill="#fff" stroke="#3d5f99" stroke-width="1.5"/><text x="4.5" y="13.5" font-size="11" font-weight="bold" font-family="Liberation Sans" fill="#3d5f99">?</text></svg>
<svg style="left:1845px;top:10px" width="6" height="4"><path d="M0 0h6l-3 3z" fill="#555"/></svg>
<svg style="left:1860px;top:4px" width="60" height="16"><path d="M2 10h8" stroke="#222" stroke-width="2.2"/><rect x="25" y="5" width="6" height="6" fill="none" stroke="#222" stroke-width="1.6"/><path d="M27 5V3h6v6h-2" fill="none" stroke="#222" stroke-width="1.6"/><path d="M46 3l8 8M54 3l-8 8" stroke="#222" stroke-width="2.4"/></svg>
<svg style="left:1867px;top:32px" width="16" height="16"><polygon points="5.95,2.75 6.30,0.60 8.70,0.60 9.05,2.75 10.25,3.32 12.14,2.26 13.64,4.14 12.18,5.75 12.48,7.04 14.49,7.86 13.96,10.20 11.79,10.07 10.96,11.11 11.57,13.19 9.41,14.23 8.16,12.46 6.84,12.46 5.59,14.23 3.43,13.19 4.04,11.11 3.21,10.07 1.04,10.20 0.51,7.86 2.52,7.04 2.82,5.75 1.36,4.14 2.86,2.26 4.75,3.32" fill="#bcd6f5" stroke="#34507e" stroke-width="1.1" stroke-linejoin="round"/><circle cx="7.5" cy="7.5" r="2.2" fill="#fff" stroke="#34507e" stroke-width="1.3"/></svg>
<svg style="left:1894px;top:30px" width="20" height="18"><circle cx="12.2" cy="6" r="4.7" fill="#fff" stroke="#4a5a70" stroke-width="1.4"/><path d="M3.5 15.5L8.8 10" stroke="#34507e" stroke-width="3.6" stroke-linecap="round"/><path d="M3.5 15.5L8.8 10" stroke="#bcd6f5" stroke-width="1.6" stroke-linecap="round"/></svg>
<div class="a" style="left:0px;top:123px;width:549px;height:21px;background:#bed2ea"></div>
<div class="t" style="left:4px;top:128px;font-size:11.5px;color:#1e1e1e;font-weight:normal;">PatchWork</div>
<div class="a" style="left:0px;top:144px;width:549px;height:887px;background:#fafbfc"></div>
<div class="a" style="left:0px;top:144px;width:1px;height:887px;background:#b7c3cf"></div>
<div class="a" style="left:548px;top:144px;width:1px;height:883px;background:#b7c3cf"></div>
<svg style="left:514px;top:126px" width="36" height="17"><path d="M4 3h5M5 3v6M8 3v6M3 9h7M6.5 9v5" stroke="#333" stroke-width="1.2" fill="none"/><rect x="16.5" y="0.5" width="16" height="16" fill="#d5e2f1" stroke="#8ea5c3"/><path d="M20.5 4.5l8 8M28.5 4.5l-8 8" stroke="#555" stroke-width="1.2"/></svg>
<div class="a" style="left:1px;top:168px;width:548px;height:1px;background:#a9b5c2"></div>
<div class="a" style="left:2px;top:148px;width:180px;height:22px;background:#fff;border:1px solid #a9b5c2;border-bottom:none;border-radius:2px 2px 0 0"></div>
<div class="t" style="left:2px;top:153px;width:180px;text-align:center;font-size:11.6px;color:#1e1e1e">PatchWork</div>
<div class="a" style="left:184px;top:150px;width:176px;height:19px;background:#dfe8f2;border:1px solid #a9b5c2;border-bottom:none;border-radius:2px 2px 0 0"></div>
<div class="t" style="left:184px;top:154px;width:176px;text-align:center;font-size:11.6px;color:#1e1e1e">Objekte</div>
<div class="a" style="left:364px;top:150px;width:176px;height:19px;background:#dfe8f2;border:1px solid #a9b5c2;border-bottom:none;border-radius:2px 2px 0 0"></div>
<div class="t" style="left:364px;top:154px;width:176px;text-align:center;font-size:11.6px;color:#1e1e1e">Layer</div>
<div class="a" style="left:2px;top:178px;width:520px;height:811px;background:#fff;border:1px solid #a9b5c2"></div>
<svg style="left:15px;top:200px" width="10" height="7"><path d="M1 0.5h8l-4 5z" fill="#444"/></svg>
<div class="t" style="left:29px;top:197px;font-size:11.7px;color:#111;font-weight:bold;">Bearbeitungsmodus</div>
<div class="a" style="left:148px;top:203px;width:339px;height:1px;background:#b3b7bc"></div>
<div class="a" style="left:29px;top:217px;width:466px;height:22px;border:1px solid #8d9aab;border-radius:4px;background:linear-gradient(#f4f7fb,#d9e4f0);overflow:hidden"><div class="a" style="left:0;top:0;width:155px;height:20px;background:linear-gradient(#a6bedd,#e1eaf5)"></div><div class="a" style="left:155px;top:0;width:1px;height:20px;background:#a9b5c2"></div><div class="a" style="left:310px;top:0;width:1px;height:20px;background:#a9b5c2"></div></div>
<div class="t" style="left:29px;top:223px;width:155px;text-align:center;font-size:11.6px;color:#1e1e1e">Höhenpunkte</div>
<div class="t" style="left:184px;top:223px;width:155px;text-align:center;font-size:11.6px;color:#1e1e1e">Kurvenpunkte</div>
<div class="t" style="left:339px;top:223px;width:156px;text-align:center;font-size:11.6px;color:#1e1e1e">Kanten</div>
<svg style="left:17px;top:250px" width="7" height="10"><path d="M1 1v8l4.5-4z" fill="#444"/></svg>
<div class="t" style="left:29px;top:249px;font-size:11.7px;color:#111;font-weight:bold;">Kurven</div>
<div class="a" style="left:76px;top:255px;width:411px;height:1px;background:#b3b7bc"></div>
<svg style="left:15px;top:276px" width="10" height="7"><path d="M1 0.5h8l-4 5z" fill="#444"/></svg>
<div class="t" style="left:29px;top:273px;font-size:11.7px;color:#111;font-weight:bold;">Höhenpunkte</div>
<div class="a" style="left:112px;top:279px;width:375px;height:1px;background:#b3b7bc"></div>
<div class="a" style="left:29px;top:295px;width:466px;height:308px;background:#fff;border:1px solid #8eabd8"></div>
<div class="a" style="left:30px;top:296px;width:464px;height:30px;background:linear-gradient(#e9eef5,#dbe3ee)"></div>
<div class="a" style="left:30px;top:325px;width:464px;height:1px;background:#8eabd8"></div>
<div class="a" style="left:66px;top:296px;width:1px;height:30px;background:#9fb6dc"></div>
<div class="a" style="left:66px;top:326px;width:1px;height:275px;background:#eef0f3"></div>
<div class="a" style="left:85px;top:296px;width:1px;height:30px;background:#9fb6dc"></div>
<div class="a" style="left:85px;top:326px;width:1px;height:275px;background:#eef0f3"></div>
<div class="a" style="left:130px;top:296px;width:1px;height:30px;background:#9fb6dc"></div>
<div class="a" style="left:130px;top:326px;width:1px;height:275px;background:#eef0f3"></div>
<div class="a" style="left:151px;top:296px;width:1px;height:30px;background:#9fb6dc"></div>
<div class="a" style="left:151px;top:326px;width:1px;height:275px;background:#eef0f3"></div>
<div class="a" style="left:190px;top:296px;width:1px;height:30px;background:#9fb6dc"></div>
<div class="a" style="left:190px;top:326px;width:1px;height:275px;background:#eef0f3"></div>
<div class="a" style="left:233px;top:296px;width:1px;height:30px;background:#9fb6dc"></div>
<div class="a" style="left:233px;top:326px;width:1px;height:275px;background:#eef0f3"></div>
<div class="a" style="left:281px;top:296px;width:1px;height:30px;background:#9fb6dc"></div>
<div class="a" style="left:281px;top:326px;width:1px;height:275px;background:#eef0f3"></div>
<div class="a" style="left:403px;top:296px;width:1px;height:30px;background:#9fb6dc"></div>
<div class="a" style="left:403px;top:326px;width:1px;height:275px;background:#eef0f3"></div>
<div class="t" style="left:34px;top:305px;font-size:11.7px;color:#111;font-weight:bold;">Index</div>
<div class="t" style="left:71px;top:305px;font-size:11.7px;color:#111;font-weight:bold;">ID</div>
<div class="t" style="left:91px;top:305px;font-size:11.7px;color:#111;font-weight:bold;">Höhe</div>
<div class="t" style="left:135px;top:305px;font-size:11.7px;color:#111;font-weight:bold;">Fix</div>
<div class="t" style="left:155px;top:305px;font-size:11.7px;color:#111;font-weight:bold;">Abh.</div>
<div class="t" style="left:196px;top:305px;font-size:11.7px;color:#111;font-weight:bold;">Kanten</div>
<div class="t" style="left:240px;top:305px;font-size:11.7px;color:#111;font-weight:bold;">Beschr.</div>
<div class="t" style="left:285px;top:305px;font-size:11.7px;color:#111;font-weight:bold;">Startpunkt</div>
<div class="t" style="left:33px;top:331px;font-size:11.7px;color:#1a1a1a;font-weight:normal;">0</div>
<div class="t" style="left:70px;top:331px;font-size:11.7px;color:#1a1a1a;font-weight:normal;">0</div>
<div class="t" style="left:91px;top:331px;font-size:11.7px;color:#a8a8a8;font-weight:normal;">1.2500</div>
<svg style="left:135px;top:330px" width="13" height="13"><rect x="0.5" y="0.5" width="12" height="12" fill="#fff" stroke="#9aa3ad"/></svg>
<div class="t" style="left:154px;top:331px;font-size:11.7px;color:#1a1a1a;font-weight:normal;">8~9</div>
<div class="t" style="left:193px;top:331px;font-size:11.7px;color:#1a1a1a;font-weight:normal;">5,10,11</div>
<svg style="left:240px;top:330px" width="13" height="13"><rect x="0.5" y="0.5" width="12" height="12" fill="#fff" stroke="#9aa3ad"/><path d="M3 6.5l2.6 2.8L10.5 3" fill="none" stroke="#3b5a8c" stroke-width="1.8"/></svg>
<svg style="left:290px;top:330px" width="16" height="16"><rect x="0.9" y="0.9" width="12.6" height="12.6" rx="1.5" fill="#f2f6fb" stroke="#6f86a8" stroke-width="1.6"/><path d="M1.5 1.5l11.4 11.4M12.9 1.5L1.5 12.9" stroke="#34507e" stroke-width="1.1"/><circle cx="0.7" cy="7.7" r="2.1" fill="#c8324a" stroke="#7a2030" stroke-width="0.7"/></svg>
<div class="t" style="left:311px;top:331px;font-size:11.7px;color:#1a1a1a;font-weight:normal;">Links Mitte</div>
<div class="t" style="left:33px;top:354px;font-size:11.7px;color:#1a1a1a;font-weight:normal;">1</div>
<div class="t" style="left:70px;top:354px;font-size:11.7px;color:#1a1a1a;font-weight:normal;">1</div>
<div class="t" style="left:91px;top:354px;font-size:11.7px;color:#a8a8a8;font-weight:normal;">0.9502</div>
<svg style="left:135px;top:353px" width="13" height="13"><rect x="0.5" y="0.5" width="12" height="12" fill="#fff" stroke="#9aa3ad"/></svg>
<div class="t" style="left:154px;top:354px;font-size:11.7px;color:#1a1a1a;font-weight:normal;">6~7</div>
<div class="t" style="left:193px;top:354px;font-size:11.7px;color:#1a1a1a;font-weight:normal;">4,5,8,9</div>
<svg style="left:240px;top:353px" width="13" height="13"><rect x="0.5" y="0.5" width="12" height="12" fill="#fff" stroke="#9aa3ad"/><path d="M3 6.5l2.6 2.8L10.5 3" fill="none" stroke="#3b5a8c" stroke-width="1.8"/></svg>
<svg style="left:290px;top:353px" width="16" height="16"><rect x="0.9" y="0.9" width="12.6" height="12.6" rx="1.5" fill="#f2f6fb" stroke="#6f86a8" stroke-width="1.6"/><path d="M1.5 1.5l11.4 11.4M12.9 1.5L1.5 12.9" stroke="#34507e" stroke-width="1.1"/><rect x="5.5" y="5.5" width="4.4" height="4.4" fill="#c8324a" stroke="#7a2030" stroke-width="0.7"/></svg>
<div class="t" style="left:311px;top:354px;font-size:11.7px;color:#1a1a1a;font-weight:normal;">Mitte Mitte</div>
<div class="t" style="left:33px;top:377px;font-size:11.7px;color:#1a1a1a;font-weight:normal;">2</div>
<div class="t" style="left:70px;top:377px;font-size:11.7px;color:#1a1a1a;font-weight:normal;">2</div>
<div class="t" style="left:91px;top:377px;font-size:11.7px;color:#a8a8a8;font-weight:normal;">0.2998</div>
<svg style="left:135px;top:376px" width="13" height="13"><rect x="0.5" y="0.5" width="12" height="12" fill="#fff" stroke="#9aa3ad"/></svg>
<div class="t" style="left:154px;top:377px;font-size:11.7px;color:#1a1a1a;font-weight:normal;">4~5</div>
<div class="t" style="left:193px;top:377px;font-size:11.7px;color:#1a1a1a;font-weight:normal;">3,4,6,7</div>
<svg style="left:240px;top:376px" width="13" height="13"><rect x="0.5" y="0.5" width="12" height="12" fill="#fff" stroke="#9aa3ad"/></svg>
<svg style="left:290px;top:376px" width="16" height="16"><rect x="0.9" y="0.9" width="12.6" height="12.6" rx="1.5" fill="#f2f6fb" stroke="#6f86a8" stroke-width="1.6"/><path d="M1.5 1.5l11.4 11.4M12.9 1.5L1.5 12.9" stroke="#34507e" stroke-width="1.1"/><rect x="5.5" y="5.5" width="4.4" height="4.4" fill="#c8324a" stroke="#7a2030" stroke-width="0.7"/></svg>
<div class="t" style="left:311px;top:377px;font-size:11.7px;color:#1a1a1a;font-weight:normal;">Mitte Mitte</div>
<div class="t" style="left:33px;top:400px;font-size:11.7px;color:#1a1a1a;font-weight:normal;">3</div>
<div class="t" style="left:70px;top:400px;font-size:11.7px;color:#1a1a1a;font-weight:normal;">3</div>
<div class="t" style="left:91px;top:400px;font-size:11.7px;color:#a8a8a8;font-weight:normal;">0.0592</div>
<svg style="left:135px;top:399px" width="13" height="13"><rect x="0.5" y="0.5" width="12" height="12" fill="#fff" stroke="#9aa3ad"/></svg>
<div class="t" style="left:154px;top:400px;font-size:11.7px;color:#1a1a1a;font-weight:normal;">10~11</div>
<div class="t" style="left:193px;top:400px;font-size:11.7px;color:#1a1a1a;font-weight:normal;">3,15,16</div>
<svg style="left:240px;top:399px" width="13" height="13"><rect x="0.5" y="0.5" width="12" height="12" fill="#fff" stroke="#9aa3ad"/><path d="M3 6.5l2.6 2.8L10.5 3" fill="none" stroke="#3b5a8c" stroke-width="1.8"/></svg>
<svg style="left:290px;top:399px" width="16" height="16"><rect x="0.9" y="0.9" width="12.6" height="12.6" rx="1.5" fill="#f2f6fb" stroke="#6f86a8" stroke-width="1.6"/><path d="M1.5 1.5l11.4 11.4M12.9 1.5L1.5 12.9" stroke="#34507e" stroke-width="1.1"/><circle cx="14.7" cy="7.7" r="2.1" fill="#c8324a" stroke="#7a2030" stroke-width="0.7"/></svg>
<div class="t" style="left:311px;top:400px;font-size:11.7px;color:#1a1a1a;font-weight:normal;">Rechts Mitte</div>
<div class="t" style="left:33px;top:423px;font-size:11.7px;color:#1a1a1a;font-weight:normal;">4</div>
<div class="t" style="left:70px;top:423px;font-size:11.7px;color:#1a1a1a;font-weight:normal;">4</div>
<div class="t" style="left:91px;top:423px;font-size:11.7px;color:#a8a8a8;font-weight:normal;">0.2405</div>
<svg style="left:135px;top:422px" width="13" height="13"><rect x="0.5" y="0.5" width="12" height="12" fill="#fff" stroke="#9aa3ad"/></svg>
<div class="t" style="left:154px;top:423px;font-size:11.7px;color:#1a1a1a;font-weight:normal;">8~10</div>
<div class="t" style="left:193px;top:423px;font-size:11.7px;color:#1a1a1a;font-weight:normal;">1,2,7</div>
<svg style="left:240px;top:422px" width="13" height="13"><rect x="0.5" y="0.5" width="12" height="12" fill="#fff" stroke="#9aa3ad"/><path d="M3 6.5l2.6 2.8L10.5 3" fill="none" stroke="#3b5a8c" stroke-width="1.8"/></svg>
<svg style="left:290px;top:422px" width="16" height="16"><rect x="0.9" y="0.9" width="12.6" height="12.6" rx="1.5" fill="#f2f6fb" stroke="#6f86a8" stroke-width="1.6"/><path d="M1.5 1.5l11.4 11.4M12.9 1.5L1.5 12.9" stroke="#34507e" stroke-width="1.1"/><circle cx="7.7" cy="0.7" r="2.1" fill="#c8324a" stroke="#7a2030" stroke-width="0.7"/></svg>
<div class="t" style="left:311px;top:423px;font-size:11.7px;color:#1a1a1a;font-weight:normal;">Mitte Oben</div>
<div class="t" style="left:33px;top:446px;font-size:11.7px;color:#1a1a1a;font-weight:normal;">5</div>
<div class="t" style="left:70px;top:446px;font-size:11.7px;color:#1a1a1a;font-weight:normal;">5</div>
<div class="t" style="left:91px;top:446px;font-size:11.7px;color:#a8a8a8;font-weight:normal;">0.3591</div>
<svg style="left:135px;top:445px" width="13" height="13"><rect x="0.5" y="0.5" width="12" height="12" fill="#fff" stroke="#9aa3ad"/></svg>
<div class="t" style="left:154px;top:446px;font-size:11.7px;color:#1a1a1a;font-weight:normal;">9~11</div>
<div class="t" style="left:193px;top:446px;font-size:11.7px;color:#1a1a1a;font-weight:normal;">6,12,13</div>
<svg style="left:240px;top:445px" width="13" height="13"><rect x="0.5" y="0.5" width="12" height="12" fill="#fff" stroke="#9aa3ad"/><path d="M3 6.5l2.6 2.8L10.5 3" fill="none" stroke="#3b5a8c" stroke-width="1.8"/></svg>
<svg style="left:290px;top:445px" width="16" height="16"><rect x="0.9" y="0.9" width="12.6" height="12.6" rx="1.5" fill="#f2f6fb" stroke="#6f86a8" stroke-width="1.6"/><path d="M1.5 1.5l11.4 11.4M12.9 1.5L1.5 12.9" stroke="#34507e" stroke-width="1.1"/><circle cx="7.7" cy="14.7" r="2.1" fill="#c8324a" stroke="#7a2030" stroke-width="0.7"/></svg>
<div class="t" style="left:311px;top:446px;font-size:11.7px;color:#1a1a1a;font-weight:normal;">Mitte Unten</div>
<div class="t" style="left:33px;top:469px;font-size:11.7px;color:#1a1a1a;font-weight:normal;">6</div>
<div class="t" style="left:70px;top:469px;font-size:11.7px;color:#1a1a1a;font-weight:normal;">6</div>
<div class="t" style="left:91px;top:469px;font-size:11.7px;color:#a8a8a8;font-weight:normal;">0.7595</div>
<svg style="left:135px;top:468px" width="13" height="13"><rect x="0.5" y="0.5" width="12" height="12" fill="#fff" stroke="#9aa3ad"/></svg>
<div class="t" style="left:154px;top:469px;font-size:11.7px;color:#1a1a1a;font-weight:normal;">8~10</div>
<div class="t" style="left:193px;top:469px;font-size:11.7px;color:#1a1a1a;font-weight:normal;">0,1,9</div>
<svg style="left:240px;top:468px" width="13" height="13"><rect x="0.5" y="0.5" width="12" height="12" fill="#fff" stroke="#9aa3ad"/><path d="M3 6.5l2.6 2.8L10.5 3" fill="none" stroke="#3b5a8c" stroke-width="1.8"/></svg>
<svg style="left:290px;top:468px" width="16" height="16"><rect x="0.9" y="0.9" width="12.6" height="12.6" rx="1.5" fill="#f2f6fb" stroke="#6f86a8" stroke-width="1.6"/><path d="M1.5 1.5l11.4 11.4M12.9 1.5L1.5 12.9" stroke="#34507e" stroke-width="1.1"/><circle cx="7.7" cy="0.7" r="2.1" fill="#c8324a" stroke="#7a2030" stroke-width="0.7"/></svg>
<div class="t" style="left:311px;top:469px;font-size:11.7px;color:#1a1a1a;font-weight:normal;">Mitte Oben</div>
<div class="a" style="left:30px;top:487px;width:464px;height:23px;background:#bcd1ea"></div>
<div class="t" style="left:33px;top:492px;font-size:11.7px;color:#1a1a1a;font-weight:normal;">7</div>
<div class="t" style="left:70px;top:492px;font-size:11.7px;color:#1a1a1a;font-weight:normal;">7</div>
<div class="t" style="left:91px;top:492px;font-size:11.7px;color:#a8a8a8;font-weight:normal;">1.1409</div>
<svg style="left:135px;top:491px" width="13" height="13"><rect x="0.5" y="0.5" width="12" height="12" fill="#fff" stroke="#9aa3ad"/></svg>
<div class="t" style="left:154px;top:492px;font-size:11.7px;color:#1a1a1a;font-weight:normal;">9~11</div>
<div class="t" style="left:193px;top:492px;font-size:11.7px;color:#1a1a1a;font-weight:normal;">8,13,14</div>
<svg style="left:240px;top:491px" width="13" height="13"><rect x="0.5" y="0.5" width="12" height="12" fill="#fff" stroke="#9aa3ad"/></svg>
<svg style="left:290px;top:491px" width="16" height="16"><rect x="0.9" y="0.9" width="12.6" height="12.6" rx="1.5" fill="#f2f6fb" stroke="#6f86a8" stroke-width="1.6"/><path d="M1.5 1.5l11.4 11.4M12.9 1.5L1.5 12.9" stroke="#34507e" stroke-width="1.1"/><circle cx="7.7" cy="14.7" r="2.1" fill="#c8324a" stroke="#7a2030" stroke-width="0.7"/></svg>
<div class="t" style="left:311px;top:492px;font-size:11.7px;color:#1a1a1a;font-weight:normal;">Mitte Unten</div>
<div class="t" style="left:33px;top:515px;font-size:11.7px;color:#1a1a1a;font-weight:normal;">8</div>
<div class="t" style="left:70px;top:515px;font-size:11.7px;color:#1a1a1a;font-weight:normal;">8</div>
<div class="t" style="left:91px;top:515px;font-size:11.7px;color:#1a1a1a;font-weight:normal;">1.0000</div>
<svg style="left:135px;top:514px" width="13" height="13"><rect x="0.5" y="0.5" width="12" height="12" fill="#fff" stroke="#9aa3ad"/><path d="M3 6.5l2.6 2.8L10.5 3" fill="none" stroke="#3b5a8c" stroke-width="1.8"/></svg>
<div class="t" style="left:154px;top:515px;font-size:11.7px;color:#1a1a1a;font-weight:normal;"></div>
<div class="t" style="left:193px;top:515px;font-size:11.7px;color:#1a1a1a;font-weight:normal;">0,11</div>
<svg style="left:240px;top:514px" width="13" height="13"><rect x="0.5" y="0.5" width="12" height="12" fill="#fff" stroke="#9aa3ad"/><path d="M3 6.5l2.6 2.8L10.5 3" fill="none" stroke="#3b5a8c" stroke-width="1.8"/></svg>
<svg style="left:290px;top:514px" width="16" height="16"><rect x="0.9" y="0.9" width="12.6" height="12.6" rx="1.5" fill="#f2f6fb" stroke="#6f86a8" stroke-width="1.6"/><path d="M1.5 1.5l11.4 11.4M12.9 1.5L1.5 12.9" stroke="#34507e" stroke-width="1.1"/><circle cx="0.7" cy="0.7" r="2.1" fill="#c8324a" stroke="#7a2030" stroke-width="0.7"/></svg>
<div class="t" style="left:311px;top:515px;font-size:11.7px;color:#1a1a1a;font-weight:normal;">Links Oben</div>
<div class="t" style="left:33px;top:538px;font-size:11.7px;color:#1a1a1a;font-weight:normal;">9</div>
<div class="t" style="left:70px;top:538px;font-size:11.7px;color:#1a1a1a;font-weight:normal;">9</div>
<div class="t" style="left:91px;top:538px;font-size:11.7px;color:#1a1a1a;font-weight:normal;">1.5000</div>
<svg style="left:135px;top:537px" width="13" height="13"><rect x="0.5" y="0.5" width="12" height="12" fill="#fff" stroke="#9aa3ad"/><path d="M3 6.5l2.6 2.8L10.5 3" fill="none" stroke="#3b5a8c" stroke-width="1.8"/></svg>
<div class="t" style="left:154px;top:538px;font-size:11.7px;color:#1a1a1a;font-weight:normal;"></div>
<div class="t" style="left:193px;top:538px;font-size:11.7px;color:#1a1a1a;font-weight:normal;">10,14</div>
<svg style="left:240px;top:537px" width="13" height="13"><rect x="0.5" y="0.5" width="12" height="12" fill="#fff" stroke="#9aa3ad"/><path d="M3 6.5l2.6 2.8L10.5 3" fill="none" stroke="#3b5a8c" stroke-width="1.8"/></svg>
<svg style="left:290px;top:537px" width="16" height="16"><rect x="0.9" y="0.9" width="12.6" height="12.6" rx="1.5" fill="#f2f6fb" stroke="#6f86a8" stroke-width="1.6"/><path d="M1.5 1.5l11.4 11.4M12.9 1.5L1.5 12.9" stroke="#34507e" stroke-width="1.1"/><circle cx="0.7" cy="14.7" r="2.1" fill="#c8324a" stroke="#7a2030" stroke-width="0.7"/></svg>
<div class="t" style="left:311px;top:538px;font-size:11.7px;color:#1a1a1a;font-weight:normal;">Links Unten</div>
<div class="t" style="left:33px;top:561px;font-size:11.7px;color:#1a1a1a;font-weight:normal;">10</div>
<div class="t" style="left:70px;top:561px;font-size:11.7px;color:#1a1a1a;font-weight:normal;">10</div>
<div class="t" style="left:91px;top:561px;font-size:11.7px;color:#1a1a1a;font-weight:normal;">0.0000</div>
<svg style="left:135px;top:560px" width="13" height="13"><rect x="0.5" y="0.5" width="12" height="12" fill="#fff" stroke="#9aa3ad"/><path d="M3 6.5l2.6 2.8L10.5 3" fill="none" stroke="#3b5a8c" stroke-width="1.8"/></svg>
<div class="t" style="left:154px;top:561px;font-size:11.7px;color:#1a1a1a;font-weight:normal;"></div>
<div class="t" style="left:193px;top:561px;font-size:11.7px;color:#1a1a1a;font-weight:normal;">2,16</div>
<svg style="left:240px;top:560px" width="13" height="13"><rect x="0.5" y="0.5" width="12" height="12" fill="#fff" stroke="#9aa3ad"/><path d="M3 6.5l2.6 2.8L10.5 3" fill="none" stroke="#3b5a8c" stroke-width="1.8"/></svg>
<svg style="left:290px;top:560px" width="16" height="16"><rect x="0.9" y="0.9" width="12.6" height="12.6" rx="1.5" fill="#f2f6fb" stroke="#6f86a8" stroke-width="1.6"/><path d="M1.5 1.5l11.4 11.4M12.9 1.5L1.5 12.9" stroke="#34507e" stroke-width="1.1"/><circle cx="14.7" cy="0.7" r="2.1" fill="#c8324a" stroke="#7a2030" stroke-width="0.7"/></svg>
<div class="t" style="left:311px;top:561px;font-size:11.7px;color:#1a1a1a;font-weight:normal;">Rechts Oben</div>
<div class="t" style="left:33px;top:584px;font-size:11.7px;color:#1a1a1a;font-weight:normal;">11</div>
<div class="t" style="left:70px;top:584px;font-size:11.7px;color:#1a1a1a;font-weight:normal;">11</div>
<div class="t" style="left:91px;top:584px;font-size:11.7px;color:#1a1a1a;font-weight:normal;">0.0000</div>
<svg style="left:135px;top:583px" width="13" height="13"><rect x="0.5" y="0.5" width="12" height="12" fill="#fff" stroke="#9aa3ad"/><path d="M3 6.5l2.6 2.8L10.5 3" fill="none" stroke="#3b5a8c" stroke-width="1.8"/></svg>
<div class="t" style="left:154px;top:584px;font-size:11.7px;color:#1a1a1a;font-weight:normal;"></div>
<div class="t" style="left:193px;top:584px;font-size:11.7px;color:#1a1a1a;font-weight:normal;">12,15</div>
<svg style="left:240px;top:583px" width="13" height="13"><rect x="0.5" y="0.5" width="12" height="12" fill="#fff" stroke="#9aa3ad"/><path d="M3 6.5l2.6 2.8L10.5 3" fill="none" stroke="#3b5a8c" stroke-width="1.8"/></svg>
<svg style="left:290px;top:583px" width="16" height="16"><rect x="0.9" y="0.9" width="12.6" height="12.6" rx="1.5" fill="#f2f6fb" stroke="#6f86a8" stroke-width="1.6"/><path d="M1.5 1.5l11.4 11.4M12.9 1.5L1.5 12.9" stroke="#34507e" stroke-width="1.1"/><circle cx="14.7" cy="14.7" r="2.1" fill="#c8324a" stroke="#7a2030" stroke-width="0.7"/></svg>
<div class="t" style="left:311px;top:584px;font-size:11.7px;color:#1a1a1a;font-weight:normal;">Rechts Unten</div>
<div class="a" style="left:85px;top:293px;width:51px;height:313px;border:3px solid #e53e3e;box-shadow:0 1px 3px rgba(0,0,0,.25)"></div>
<div class="a" style="left:233px;top:291px;width:165px;height:315px;border:3px solid #e53e3e;box-shadow:0 1px 3px rgba(0,0,0,.25)"></div>
<div class="t" style="left:150px;top:612px;width:217px;text-align:right;font-size:11.7px;color:#1e1e1e">Höhe</div>
<div class="a" style="left:379px;top:607px;width:95px;height:21px;border:1px solid #a9b0b8;background:#fff;font-size:11.7px;color:#1a1a1a;line-height:19px;padding-left:3px;white-space:nowrap">1.1409</div>
<svg style="left:478px;top:611px" width="13" height="13"><rect x="0.5" y="0.5" width="12" height="12" fill="#fff" stroke="#9aa3ad"/></svg>
<div class="t" style="left:150px;top:638px;width:217px;text-align:right;font-size:11.7px;color:#1e1e1e">Delta</div>
<div class="a" style="left:379px;top:633px;width:90px;height:21px;border:1px solid #a9b0b8;background:#fff;font-size:11.7px;color:#1a1a1a;line-height:19px;padding-left:3px;white-space:nowrap">0.0000</div>
<svg style="left:473px;top:633px" width="22" height="22"><rect x="0.5" y="0.5" width="21" height="21" rx="3" fill="#d5e1ef" stroke="#8ea8cc"/><path d="M11 4v14M7.5 7.5L11 4l3.5 3.5M7.5 14.5L11 18l3.5-3.5" fill="none" stroke="#3b5a8c" stroke-width="1.5"/></svg>
<svg style="left:17px;top:668px" width="7" height="10"><path d="M1 1v8l4.5-4z" fill="#444"/></svg>
<div class="t" style="left:29px;top:667px;font-size:11.7px;color:#111;font-weight:bold;">Kanten</div>
<div class="a" style="left:76px;top:673px;width:411px;height:1px;background:#b3b7bc"></div>
<svg style="left:17px;top:692px" width="7" height="10"><path d="M1 1v8l4.5-4z" fill="#444"/></svg>
<div class="t" style="left:29px;top:691px;font-size:11.7px;color:#111;font-weight:bold;">Flächen</div>
<div class="a" style="left:78px;top:697px;width:409px;height:1px;background:#b3b7bc"></div>
<svg style="left:15px;top:718px" width="10" height="7"><path d="M1 0.5h8l-4 5z" fill="#444"/></svg>
<div class="t" style="left:29px;top:715px;font-size:11.7px;color:#111;font-weight:bold;">Erzeugung</div>
<div class="a" style="left:96px;top:721px;width:391px;height:1px;background:#b3b7bc"></div>
<div class="t" style="left:150px;top:743px;width:217px;text-align:right;font-size:11.7px;color:#1e1e1e">Nur Oberseite</div>
<svg style="left:379px;top:742px" width="13" height="13"><rect x="0.5" y="0.5" width="12" height="12" fill="#fff" stroke="#9aa3ad"/></svg>
<div class="t" style="left:396px;top:743px;font-size:11.7px;color:#1a1a1a;font-weight:normal;">Erzeugen</div>
<div class="t" style="left:150px;top:769px;width:217px;text-align:right;font-size:11.7px;color:#1e1e1e">Offset</div>
<svg style="left:379px;top:763px" width="116" height="22"><rect x="0.5" y="0.5" width="115" height="21" rx="3" fill="#d5e1ef" stroke="#8ea8cc"/><path d="M50.6 11.4L58.6 3.4M57.4 18.3L65.4 10.6M55 7.4H61.4M55.2 7.4L55.4 13.6M57.5 9L62 13.6H63.5" fill="none" stroke="#3f5575" stroke-width="1.3" stroke-linecap="round"/></svg>
<div class="t" style="left:150px;top:795px;width:217px;text-align:right;font-size:11.7px;color:#1e1e1e">Unterseite letzte Schicht</div>
<svg style="left:379px;top:794px" width="13" height="13"><rect x="0.5" y="0.5" width="12" height="12" fill="#fff" stroke="#9aa3ad"/></svg>
<div class="t" style="left:396px;top:795px;font-size:11.7px;color:#1a1a1a;font-weight:normal;">Horizontal</div>
<div class="t" style="left:150px;top:821px;width:217px;text-align:right;font-size:11.7px;color:#1e1e1e">Offset Unterseite</div>
<div class="a" style="left:379px;top:815px;width:116px;height:21px;border:1px solid #a9b0b8;background:#fff;font-size:11.7px;color:#1a1a1a;line-height:19px;padding-left:3px;white-space:nowrap">1.0000</div>
<div class="t" style="left:150px;top:847px;width:217px;text-align:right;font-size:11.7px;color:#1e1e1e">Unterteilung</div>
<div class="a" style="left:379px;top:841px;width:116px;height:21px;border:1px solid #a9b0b8;background:#fff;font-size:11.7px;color:#1a1a1a;line-height:19px;padding-left:3px;white-space:nowrap">36</div>
<div class="t" style="left:150px;top:873px;width:217px;text-align:right;font-size:11.7px;color:#1e1e1e">Anzahl U-Kurven</div>
<div class="a" style="left:379px;top:867px;width:116px;height:21px;border:1px solid #a9b0b8;background:#fff;font-size:11.7px;color:#1a1a1a;line-height:19px;padding-left:3px;white-space:nowrap">3</div>
<div class="t" style="left:150px;top:899px;width:217px;text-align:right;font-size:11.7px;color:#1e1e1e">Anzahl V-Kurven</div>
<div class="a" style="left:379px;top:893px;width:116px;height:21px;border:1px solid #a9b0b8;background:#fff;font-size:11.7px;color:#1a1a1a;line-height:19px;padding-left:3px;white-space:nowrap">3</div>
<div class="t" style="left:150px;top:925px;width:217px;text-align:right;font-size:11.7px;color:#1e1e1e">Offset Z</div>
<svg style="left:379px;top:924px" width="13" height="13"><rect x="0.5" y="0.5" width="12" height="12" fill="#fff" stroke="#9aa3ad"/></svg>
<div class="a" style="left:400px;top:919px;width:95px;height:21px;border:1px solid #a9b0b8;background:#eeeeee;font-size:11.7px;color:#a0a0a0;line-height:19px;padding-left:3px;text-align:center;white-space:nowrap">0.0000</div>
<div class="a" style="left:2px;top:989px;width:543px;height:38px;background:#d9e3ee"></div>
<div class="a" style="left:372px;top:998px;width:76px;height:22px;border:1px solid #8ea8cc;border-radius:3px;background:linear-gradient(#eef3f9,#dce6f1);font-size:11.7px;text-align:center;line-height:20px;color:#1e1e1e">Abbrechen</div>
<div class="a" style="left:455px;top:998px;width:74px;height:22px;border:1px solid #8ea8cc;border-radius:3px;background:linear-gradient(#eef3f9,#dce6f1);font-size:11.7px;text-align:center;line-height:20px;color:#1e1e1e">Schließen</div>
<div class="a" style="left:521px;top:185px;width:22px;height:90px;background:#bcd1ea;border:1px solid #a9b5c2;border-left:none;border-radius:0 3px 3px 0"></div>
<div class="t" style="left:532px;top:230px;font-size:11.6px;color:#1e1e1e;transform:translate(-50%,-50%) rotate(-90deg)">Geometrie</div>
<div class="a" style="left:521px;top:281px;width:21px;height:87px;background:#e1e9f2;border:1px solid #a9b5c2;border-left:none;border-radius:0 3px 3px 0"></div>
<div class="t" style="left:531px;top:324px;font-size:11.6px;color:#1e1e1e;transform:translate(-50%,-50%) rotate(-90deg)">Darstellung</div>
<div class="a" style="left:521px;top:377px;width:21px;height:85px;background:#e1e9f2;border:1px solid #a9b5c2;border-left:none;border-radius:0 3px 3px 0"></div>
<div class="t" style="left:531px;top:419px;font-size:11.6px;color:#1e1e1e;transform:translate(-50%,-50%) rotate(-90deg)">Beschriftung</div>
<div class="a" style="left:515px;top:372px;width:32px;height:101px;border:3px solid #e53e3e"></div>
<div class="a" style="left:549px;top:123px;width:1371px;height:908px;background:#fff"></div>
<div class="a" style="left:553px;top:123px;width:1344px;height:908px;background:#fff;border:1px solid #a3a3a3;border-top:2px solid #b0b0b0;border-right:2px solid #a9a9a9"></div>
<div class="a" style="left:1188px;top:124px;width:73px;height:27px;background:#bfd4eb"></div>
<div class="t" style="left:1197px;top:132px;font-size:13.1px;color:#0a0a0a;font-weight:normal;">Grundriss</div>
<svg style="left:1860px;top:130px" width="32" height="13"><rect x="3" y="5" width="7" height="5.5" fill="#e6e6e6" stroke="#9a9a9a" stroke-width="1.6"/><path d="M6 5V2.5h7.5V7.5H10" fill="#e6e6e6" stroke="#9a9a9a" stroke-width="1.6"/><path d="M19 2.5l7 7M26 2.5l-7 7" stroke="#9a9a9a" stroke-width="2.3"/></svg>
<svg style="left:0;top:0" width="1920" height="1080" viewBox="0 0 1920 1080"><defs><filter id="grass" x="0" y="0" width="100%" height="100%" color-interpolation-filters="sRGB"><feTurbulence type="fractalNoise" baseFrequency="0.32 0.22" numOctaves="3" seed="3"/><feColorMatrix type="matrix" values="0.34 0 0 0 0.475  0.32 0 0 0 0.575  0.32 0 0 0 0.43  0 0 0 0 1"/><feComposite in2="SourceGraphic" operator="in"/></filter><filter id="conc" x="0" y="0" width="100%" height="100%" color-interpolation-filters="sRGB"><feTurbulence type="fractalNoise" baseFrequency="0.01 0.06" numOctaves="3" seed="7"/><feColorMatrix type="matrix" values="0.05 0 0 0 0.805  0.05 0 0 0 0.815  0.05 0 0 0 0.81  0 0 0 0 1"/><feComposite in2="SourceGraphic" operator="in"/></filter></defs><rect x="747.5" y="258.5" width="318.0" height="319.0" fill="#d4d4d4"/><rect x="1065.5" y="258.5" width="319.0" height="319.0" fill="#a5bf90"/><rect x="1384.5" y="258.5" width="318.0" height="319.0" fill="#d4d4d4"/><path d="M 747.5 577.5 H 1065.5 V 895.5 C 970.5 859.5 842.5 859.5 747.5 895.5 Z" fill="#a5bf90"/><path d="M 1065.5 577.5 H 1384.5 V 895.5 C 1289.5 931.5 1160.5 931.5 1065.5 895.5 Z" fill="#d4d4d4"/><path d="M 1384.5 577.5 H 1702.5 V 895.5 C 1607.5 859.5 1479.5 859.5 1384.5 895.5 Z" fill="#a5bf90"/><path d="M 1065.5 258.5 H 1384.5 V 577.5 H 1065.5 Z" fill="#000" filter="url(#grass)"/><path d="M 747.5 577.5 H 1065.5 V 895.5 C 970.5 859.5 842.5 859.5 747.5 895.5 Z" fill="#000" filter="url(#grass)"/><path d="M 1384.5 577.5 H 1702.5 V 895.5 C 1607.5 859.5 1479.5 859.5 1384.5 895.5 Z" fill="#000" filter="url(#grass)"/><path d="M 747.5 258.5 H 1065.5 V 577.5 H 747.5 Z" fill="#000" filter="url(#conc)"/><path d="M 1384.5 258.5 H 1702.5 V 577.5 H 1384.5 Z" fill="#000" filter="url(#conc)"/><path d="M 1065.5 577.5 H 1384.5 V 895.5 C 1289.5 931.5 1160.5 931.5 1065.5 895.5 Z" fill="#000" filter="url(#conc)"/><path d="M 667 258.5 H 1782" stroke="#000" stroke-width="1" fill="none" shape-rendering="crispEdges"/><path d="M 747.5 577.5 H 1702.5" stroke="#d6c830" stroke-width="1" shape-rendering="crispEdges"/><path d="M 747.5 179 V 895.5 M 1702.5 179 V 895.5" stroke="#000" stroke-width="1" fill="none" shape-rendering="crispEdges"/><path d="M 1065.5 258.5 V 895.5 M 1384.5 258.5 V 895.5" stroke="#000" stroke-width="1" fill="none" shape-rendering="crispEdges"/><path d="M 747.5 895.5 V 975 M 1702.5 895.5 V 975 M 667 895.5 H 826 M 1623 895.5 H 1782" stroke="#000" stroke-width="1" fill="none" shape-rendering="crispEdges"/><path d="M 747.5 895.5 C 842.5 859.5 970.5 859.5 1065.5 895.5 C 1160.5 931.5 1289.5 931.5 1384.5 895.5 C 1479.5 859.5 1607.5 859.5 1702.5 895.5" stroke="#000" stroke-width="1.1" fill="none"/></svg>
<div class="t" style="left:674px;top:210.8px;font-size:44.5px;color:#000;transform:translate(-50%,-50%) scaleY(1.055);">0.000</div>
<div class="t" style="left:1065px;top:210.8px;font-size:44.5px;color:#000;transform:translate(-50%,-50%) scaleY(1.055);">0.359</div>
<div class="t" style="left:1775px;top:210.8px;font-size:44.5px;color:#000;transform:translate(-50%,-50%) scaleY(1.055);">1.500</div>
<div class="t" style="left:674px;top:576.8px;font-size:44.5px;color:#000;transform:translate(-50%,-50%) scaleY(1.055);">0.059</div>
<div class="t" style="left:1384px;top:576.8px;font-size:44.5px;color:#000;transform:translate(-50%,-50%) scaleY(1.055);background:#fff;padding:5px 4px 7px 4px;">0.950</div>
<div class="t" style="left:1775px;top:576.8px;font-size:44.5px;color:#000;transform:translate(-50%,-50%) scaleY(1.055);">1.250</div>
<div class="t" style="left:674px;top:942.8px;font-size:44.5px;color:#000;transform:translate(-50%,-50%) scaleY(1.055);">0.000</div>
<div class="t" style="left:1065px;top:942.8px;font-size:44.5px;color:#000;transform:translate(-50%,-50%) scaleY(1.055);">0.240</div>
<div class="t" style="left:1384px;top:942.8px;font-size:44.5px;color:#000;transform:translate(-50%,-50%) scaleY(1.055);">0.760</div>
<div class="t" style="left:1775px;top:942.8px;font-size:44.5px;color:#000;transform:translate(-50%,-50%) scaleY(1.055);">1.000</div>
<svg style="left:570px;top:878px" width="110" height="110"><path d="M44 19v40" stroke="#3aa53a" stroke-width="2"/><text x="38.5" y="14.5" font-family="Liberation Sans" font-size="14.5" font-weight="bold" fill="#2ca02c">Y</text><path d="M6 66h32" stroke="#c9a0a8" stroke-width="1.2" stroke-dasharray="1.5 2"/><path d="M44 73v37" stroke="#a9c9a9" stroke-width="1.2" stroke-dasharray="1.5 2"/><rect x="32.5" y="54.5" width="19" height="23" fill="none" stroke="#888" stroke-width="0.8" stroke-dasharray="1.5 1.5"/><rect x="37.5" y="59" width="14" height="14" fill="#1010d8"/><rect x="43" y="64.5" width="3" height="3" fill="#fff"/><path d="M51 66h38" stroke="#e01818" stroke-width="2"/><text x="93.5" y="71.5" font-family="Liberation Sans" font-size="14" font-weight="bold" fill="#d02030">X</text><text x="23.5" y="88" font-family="Liberation Sans" font-size="15" font-weight="bold" fill="#1010d8">Z</text></svg>
<svg style="left:562px;top:1004px" width="18" height="18"><rect x="6" y="6" width="6" height="6" fill="#f06a7a" stroke="#c03040" stroke-width="0.8"/><g fill="#3b5070"><path d="M9 1l2 2h-4z"/><path d="M9 17l2-2h-4z"/><path d="M1 9l2 2v-4z"/><path d="M17 9l-2 2v-4z"/><path d="M3 3l3 1l-2 2z"/><path d="M15 3l-3 1l2 2z"/><path d="M3 15l3-1l-2-2z"/><path d="M15 15l-3-1l2-2z"/></g></svg>
<div class="a" style="left:1896px;top:123px;width:24px;height:908px;background:#fff"></div>
<div class="a" style="left:1898px;top:123px;width:22px;height:302px;background:#fff;border:1px solid #b5b5b5;border-right:2px solid #a9a9a9;border-bottom:2px solid #b0b0b0;border-radius:4px 0 0 0"></div>
<div class="t" style="left:1909px;top:275px;font-size:11px;color:#1e1e1e;transform:translate(-50%,-50%) rotate(-90deg)">Assistenten</div>
<div class="a" style="left:1898px;top:425px;width:22px;height:300px;background:#fff;border:1px solid #b5b5b5;border-right:2px solid #a9a9a9;border-bottom:2px solid #b0b0b0;border-radius:4px 0 0 0"></div>
<div class="t" style="left:1909px;top:575px;font-size:11px;color:#1e1e1e;transform:translate(-50%,-50%) rotate(-90deg)">Bibliothek</div>
<div class="a" style="left:1898px;top:725px;width:22px;height:296px;background:#fff;border:1px solid #b5b5b5;border-right:2px solid #a9a9a9;border-bottom:2px solid #b0b0b0;border-radius:4px 0 0 0"></div>
<div class="t" style="left:1909px;top:873px;font-size:11px;color:#1e1e1e;transform:translate(-50%,-50%) rotate(-90deg)">Ebenen</div>
<div class="a" style="left:0px;top:1027px;width:553px;height:4px;background:#fff"></div>
<div class="a" style="left:0px;top:1031px;width:1920px;height:28px;background:#dce5ef"></div>
<div class="a" style="left:0px;top:1030px;width:1920px;height:1px;background:#a0a0a0"></div>
<div class="a" style="left:0px;top:1031px;width:578px;height:27px;background:#fff;border-right:1px solid #a8a8a8;border-left:1px solid #a8a8a8"></div>
<div class="a" style="left:5px;top:1034px;width:1px;height:23px;border-left:1px solid #aaa;border-bottom:1px solid #aaa;width:3px"></div>
<div class="t" style="left:13px;top:1038px;font-size:12px;color:#000;font-weight:bold;">&lt;PatchWork ändern&gt; Höhenpunkt wählen... (STRG+Klick Hinzufügen, ALT+Klick für Verschieben)</div>
<div class="a" style="left:0px;top:1058px;width:1920px;height:1px;background:#a8b4c0"></div>
<div class="a" style="left:0px;top:1059px;width:1920px;height:21px;background:#ececec"></div>
<div class="a" style="left:0px;top:1078px;width:1920px;height:2px;background:#b9cbe0"></div>
<div class="t" style="left:3px;top:1065px;font-size:11.4px;color:#1e1e1e;font-weight:normal;">Drücken Sie F1, um Hilfe zu erhalten.</div>
<div class="t" style="left:504px;top:1065px;font-size:11.4px;color:#1e1e1e;font-weight:normal;">Land:</div>
<div class="t" style="left:541px;top:1065px;font-size:11.4px;color:#1e1e1e;font-weight:normal;">Schweiz</div>
<div class="t" style="left:689px;top:1065px;font-size:11.4px;color:#1e1e1e;font-weight:normal;">Grafische Überschreibung:</div>
<div class="t" style="left:836px;top:1065px;font-size:11.4px;color:#1e1e1e;font-weight:normal;">Aus</div>
<div class="t" style="left:1047px;top:1065px;font-size:11.4px;color:#1e1e1e;font-weight:normal;">Zeichnungstyp:</div>
<div class="t" style="left:1137px;top:1065px;font-size:11.4px;color:#1e1e1e;font-weight:normal;">Baueingabe</div>
<div class="t" style="left:1205px;top:1065px;font-size:11.4px;color:#1e1e1e;font-weight:normal;">-</div>
<div class="t" style="left:1216px;top:1065px;font-size:11.4px;color:#1e1e1e;font-weight:normal;">Neubau farbig</div>
<div class="t" style="left:1376px;top:1065px;font-size:11.4px;color:#1e1e1e;font-weight:normal;">Maßstab:</div>
<div class="t" style="left:1433px;top:1065px;font-size:11.4px;color:#1e1e1e;font-weight:normal;">1 : 50</div>
<div class="t" style="left:1501px;top:1065px;font-size:11.4px;color:#1e1e1e;font-weight:normal;">Länge:</div>
<div class="t" style="left:1545px;top:1065px;font-size:11.4px;color:#b0b0b0;font-weight:normal;">m</div>
<div class="t" style="left:1594px;top:1065px;font-size:11.4px;color:#1e1e1e;font-weight:normal;">Winkel:</div>
<div class="t" style="left:1641px;top:1065px;font-size:11.4px;color:#1e1e1e;font-weight:normal;">0.000</div>
<div class="t" style="left:1688px;top:1065px;font-size:11.4px;color:#b0b0b0;font-weight:normal;">deg</div>
<div class="t" style="left:1738px;top:1065px;font-size:11.4px;color:#1e1e1e;font-weight:normal;">%:</div>
<div class="t" style="left:1759px;top:1065px;font-size:11.4px;color:#1e1e1e;font-weight:normal;">1</div>
<div class="t" style="left:1810px;top:1065px;font-size:11.4px;color:#1e1e1e;font-weight:normal;">Benachrichtungen</div>
<div class="a" style="left:685px;top:1060px;width:1px;height:18px;background:#d8d8d8"></div>
<div class="a" style="left:1040px;top:1060px;width:1px;height:18px;background:#d8d8d8"></div>
<div class="a" style="left:1372px;top:1060px;width:1px;height:18px;background:#d8d8d8"></div>
<div class="a" style="left:1497px;top:1060px;width:1px;height:18px;background:#d8d8d8"></div>
<div class="a" style="left:1590px;top:1060px;width:1px;height:18px;background:#d8d8d8"></div>
<div class="a" style="left:1734px;top:1060px;width:1px;height:18px;background:#d8d8d8"></div>
<div class="a" style="left:1784px;top:1060px;width:1px;height:18px;background:#d8d8d8"></div>
<svg style="left:1790px;top:1062px" width="16" height="16"><path d="M2.5 1.5h11v10h-5l-3 3v-3h-3z" fill="#fff" stroke="#555" stroke-width="1"/><path d="M8 3.5v5M8 9.8v1.2" stroke="#e02020" stroke-width="1.8"/></svg>
<svg style="left:531px;top:257px" width="14" height="20"><path d="M0.5 0.5 L0.5 16 L4 12.5 L7 18.5 L9.5 17.3 L6.6 11.5 L11.5 11.5 Z" fill="#fff" stroke="#000" stroke-width="1"/></svg></body></html>
